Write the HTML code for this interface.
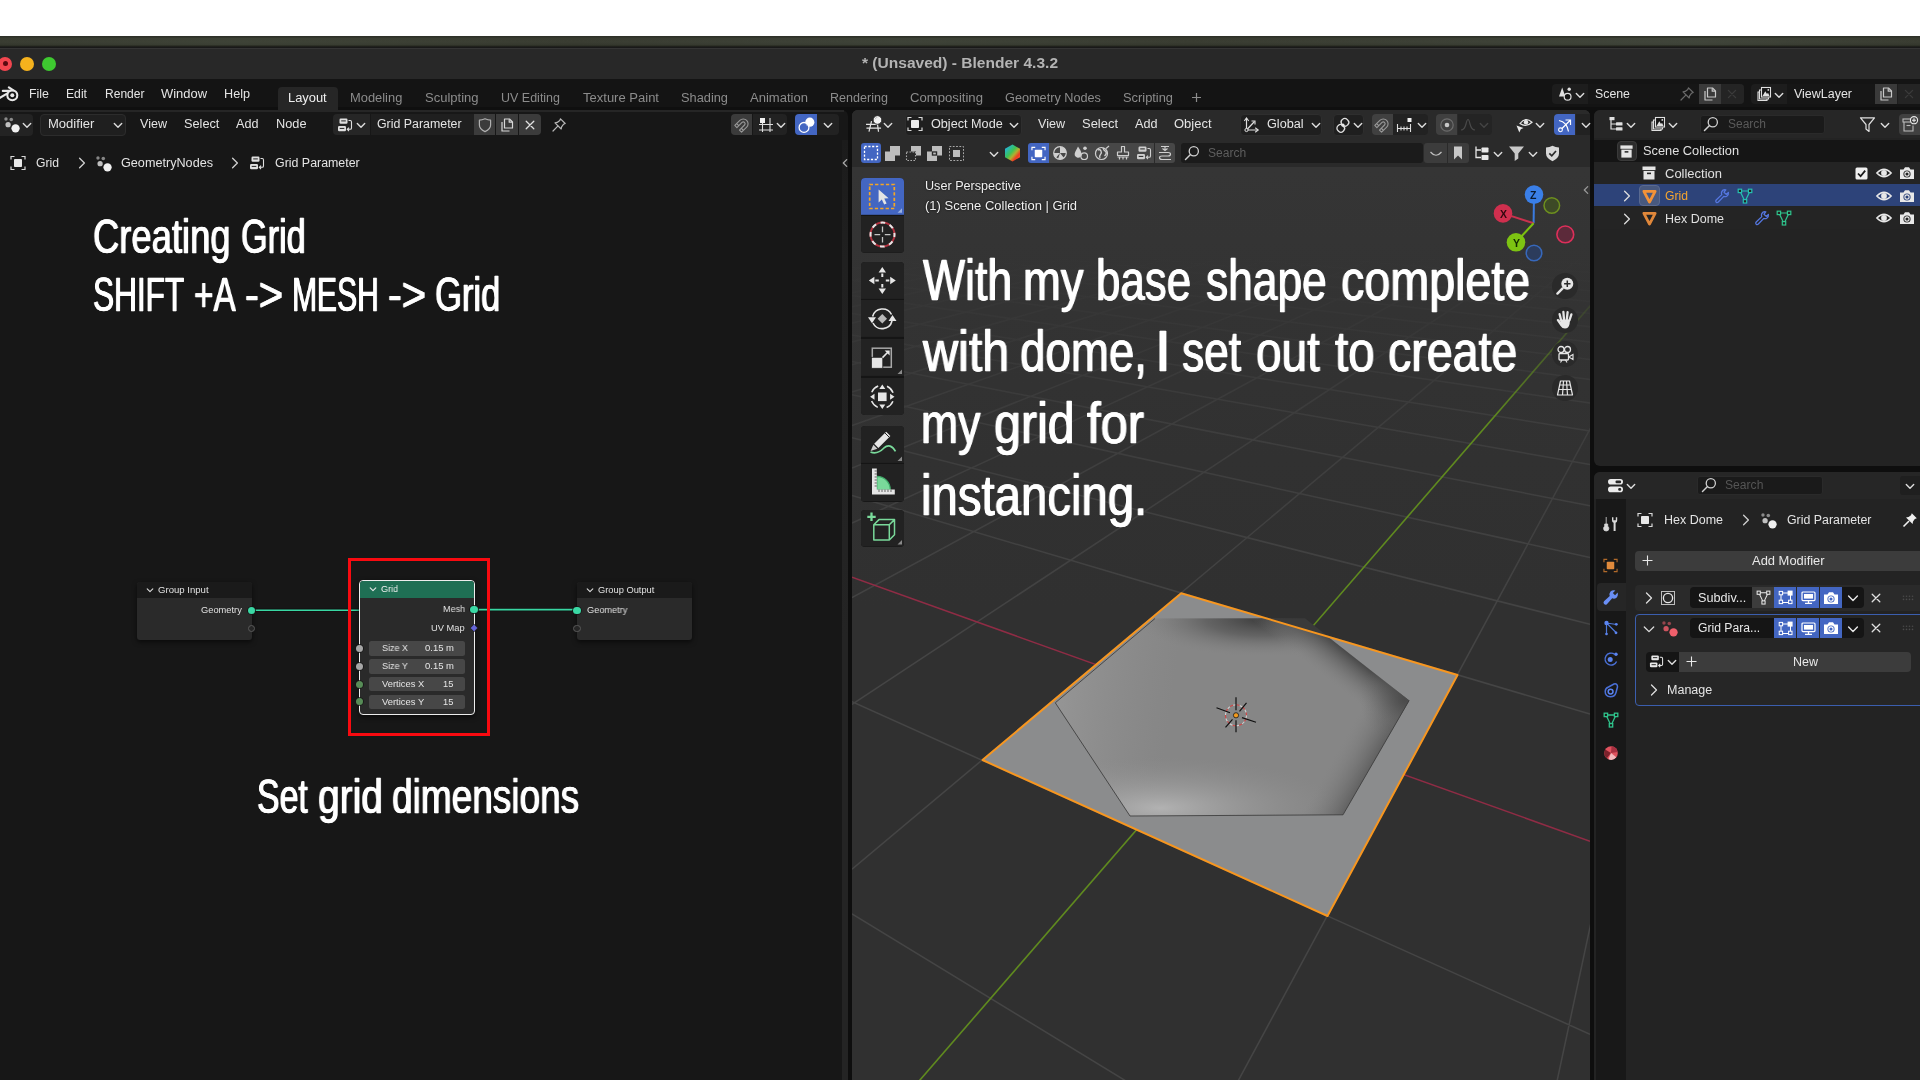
<!DOCTYPE html>
<html>
<head>
<meta charset="utf-8">
<title>Blender</title>
<style>
*{box-sizing:border-box;margin:0;padding:0}
html,body{width:1920px;height:1080px;overflow:hidden;background:#fff}
body{position:relative;font-family:"Liberation Sans",sans-serif;font-size:12px;color:#e2e2e2}
.a{position:absolute}
.t{position:absolute;white-space:nowrap;line-height:16px;height:16px;transform-origin:0 50%}
.big{position:absolute;white-space:nowrap;color:#fff;transform-origin:0 0;line-height:1;-webkit-text-stroke:0.5px #fff;text-shadow:0.7px 0 0 #fff,-0.7px 0 0 #fff}
svg{position:absolute;overflow:visible}
.t,.big{will-change:transform}
</style>
</head>
<body>

<!-- FRAME -->
<div class="a" style="left:0px;top:36px;width:1920px;height:12px;background:linear-gradient(180deg,#2b2e26 0px,#383b30 2.5px,#3a3d32 6px,#34372d 9px,#26281f 10.2px,#191919 10.8px,#191919 12px);"></div>
<div class="a" style="left:0px;top:38px;width:1920px;height:7px;background:linear-gradient(90deg,rgba(60,66,52,.0) 0%,rgba(70,78,64,.35) 12%,rgba(50,54,40,0) 30%,rgba(72,80,70,.3) 47%,rgba(50,54,40,0) 62%,rgba(76,84,74,.35) 88%,rgba(50,54,40,0) 100%);"></div>
<div class="a" style="left:0px;top:47.5px;width:1920px;height:31.5px;background:#282828;border-radius:0;border-top:1px solid #343434;"></div>
<div class="a" style="left:-2px;top:56.5px;width:14px;height:14px;border-radius:7px;background:#f2464f"></div>
<div class="a" style="left:20px;top:56.5px;width:14px;height:14px;border-radius:7px;background:#f5b21d"></div>
<div class="a" style="left:42px;top:56.5px;width:14px;height:14px;border-radius:7px;background:#3ec930"></div>
<div class="a" style="left:2.5px;top:61px;width:5px;height:5px;border-radius:3px;background:#5a0a10"></div>
<span class="t" style="transform:scaleX(1.110);left:862px;top:55px;font-size:14px;color:#b4b4b4;font-weight:bold;">* (Unsaved) - Blender 4.3.2</span>
<div class="a" style="left:0px;top:79px;width:1920px;height:31px;background:#141414;"></div>
<div class="a" style="left:0px;top:106.5px;width:1920px;height:3.5px;background:#0f0f0f;"></div>
<div class="a" style="left:0px;top:110px;width:1920px;height:970px;background:#0e0e0e;"></div>
<svg style="left:0px;top:84px" width="20" height="20" viewBox="0 0 20 20"><g fill="none" stroke="#e8e8e8" stroke-width="2.1" stroke-linecap="round" stroke-linejoin="round"><path d="M-0.5 14 L7 9.6 M2.8 6.9 H9.6 M8.9 3.4 L13 6.2"/><ellipse cx="12.3" cy="11.3" rx="5" ry="4.9"/></g><circle cx="12.3" cy="11.3" r="2" fill="#e8e8e8"/></svg>
<span class="t" style="transform:scaleX(1.034);left:29px;top:86px;font-size:12px;color:#e4e4e4;">File</span>
<span class="t" style="transform:scaleX(1.015);left:66px;top:86px;font-size:12px;color:#e4e4e4;">Edit</span>
<span class="t" style="transform:scaleX(1.004);left:104.5px;top:86px;font-size:12px;color:#e4e4e4;">Render</span>
<span class="t" style="transform:scaleX(1.078);left:161.3px;top:86px;font-size:12px;color:#e4e4e4;">Window</span>
<span class="t" style="transform:scaleX(1.053);left:224.2px;top:86px;font-size:12px;color:#e4e4e4;">Help</span>
<div class="a" style="left:278px;top:87px;width:60px;height:23px;background:#262626;border-radius:4px 4px 0 0;"></div>
<span class="t" style="transform:scaleX(1.074);left:288.3px;top:89.5px;font-size:12px;color:#f0f0f0;">Layout</span>
<span class="t" style="transform:scaleX(1.074);left:349.7px;top:89.5px;font-size:12px;color:#8c8c8c;">Modeling</span>
<span class="t" style="transform:scaleX(1.086);left:424.7px;top:89.5px;font-size:12px;color:#8c8c8c;">Sculpting</span>
<span class="t" style="transform:scaleX(1.041);left:501.3px;top:89.5px;font-size:12px;color:#8c8c8c;">UV Editing</span>
<span class="t" style="transform:scaleX(1.085);left:583px;top:89.5px;font-size:12px;color:#8c8c8c;">Texture Paint</span>
<span class="t" style="transform:scaleX(1.067);left:681px;top:89.5px;font-size:12px;color:#8c8c8c;">Shading</span>
<span class="t" style="transform:scaleX(1.087);left:750px;top:89.5px;font-size:12px;color:#8c8c8c;">Animation</span>
<span class="t" style="transform:scaleX(1.047);left:830px;top:89.5px;font-size:12px;color:#8c8c8c;">Rendering</span>
<span class="t" style="transform:scaleX(1.094);left:910px;top:89.5px;font-size:12px;color:#8c8c8c;">Compositing</span>
<span class="t" style="transform:scaleX(1.058);left:1005px;top:89.5px;font-size:12px;color:#8c8c8c;">Geometry Nodes</span>
<span class="t" style="transform:scaleX(1.071);left:1123px;top:89.5px;font-size:12px;color:#8c8c8c;">Scripting</span>
<svg style="left:1190.5px;top:92px" width="11" height="11" viewBox="0 0 11 11"><path d="M5.5 1 V10 M1 5.5 H10" stroke="#8c8c8c" stroke-width="1.2" fill="none"/></svg>
<div class="a" style="left:1552px;top:84px;width:192px;height:20px;background:#1d1d1d;border-radius:4px;"></div>
<div class="a" style="left:1587.5px;top:84px;width:111px;height:20px;background:#161616;border-radius:0;"></div>
<div class="a" style="left:1698.5px;top:84px;width:22px;height:20px;background:#3a3a3a;border-radius:0;"></div>
<div class="a" style="left:1720.5px;top:84px;width:23px;height:20px;background:#242424;border-radius:0 4px 4px 0;"></div>
<svg style="left:1556.5px;top:86.0px" width="16" height="16" viewBox="0 0 16 16" ><path d="M5.2 1.5 L8.3 10.5 H2 Z" fill="#e0e0e0"/><circle cx="12.2" cy="3.2" r="1.7" fill="#e0e0e0"/><circle cx="10.6" cy="10.8" r="3.4" fill="#151515" stroke="#e0e0e0" stroke-width="1.2"/></svg>
<svg style="left:1574.5px;top:89.5px" width="10" height="10" viewBox="-5 -5 10 10"><path d="M-3.7 -1.55 L0 2.15 L3.7 -1.55" fill="none" stroke="#ddd" stroke-width="1.4" stroke-linecap="round" stroke-linejoin="round"/></svg>
<span class="t" style="transform:scaleX(1.028);left:1595px;top:86px;font-size:12px;color:#e4e4e4;">Scene</span>
<svg style="left:1678.5px;top:86.0px" width="16" height="16" viewBox="0 0 16 16" ><g fill="none" stroke="#6a6a6a" stroke-width="1.2" stroke-linejoin="round" stroke-linecap="round"><path d="M9.5 1.8 L14.2 6.5 L12.6 7.2 L10.6 9.8 L10.2 12 L4 5.8 L6.2 5.4 L8.8 3.4 Z"/><path d="M6.8 9.2 L2 14"/></g></svg>
<svg style="left:1701.5px;top:86.0px" width="16" height="16" viewBox="0 0 16 16" ><g fill="none" stroke="#c8c8c8" stroke-width="1.2" stroke-linejoin="round"><path d="M5.5 2 H10.5 L13.5 5 V11 H5.5 Z"/><path d="M10.2 2.2 V5.2 H13.2"/><path d="M3 5 V14 H10.5"/></g></svg>
<svg style="left:1726px;top:88px" width="12" height="12" viewBox="-6 -6 12 12"><path d="M-3.6 -3.6 L3.6 3.6 M3.6 -3.6 L-3.6 3.6" stroke="#3c3c3c" stroke-width="1.3" stroke-linecap="round" fill="none"/></svg>
<div class="a" style="left:1751px;top:84px;width:169px;height:20px;background:#1d1d1d;border-radius:4px 0 0 4px;"></div>
<div class="a" style="left:1786.5px;top:84px;width:88px;height:20px;background:#161616;border-radius:0;"></div>
<div class="a" style="left:1874.5px;top:84px;width:22.5px;height:20px;background:#3a3a3a;border-radius:0;"></div>
<div class="a" style="left:1897.5px;top:84px;width:22.5px;height:20px;background:#242424;border-radius:0;"></div>
<svg style="left:1755.5px;top:86.0px" width="16" height="16" viewBox="0 0 16 16" ><g fill="none" stroke="#e0e0e0" stroke-width="1.1"><path d="M3.5 6 H2 V14.5 H11 V13"/><path d="M5 4 H3.5 V13 H12.5 V11.5"/><rect x="5.5" y="1.5" width="9" height="9.5" fill="#151515"/></g><path d="M6.5 10 L9.3 5.2 L11 8 L12 6.8 L13.5 10 Z" fill="#e0e0e0"/><circle cx="12.3" cy="3.9" r="0.9" fill="#e0e0e0"/></svg>
<svg style="left:1773.5px;top:89.5px" width="10" height="10" viewBox="-5 -5 10 10"><path d="M-3.7 -1.55 L0 2.15 L3.7 -1.55" fill="none" stroke="#ddd" stroke-width="1.4" stroke-linecap="round" stroke-linejoin="round"/></svg>
<span class="t" style="transform:scaleX(1.039);left:1794.3px;top:86px;font-size:12px;color:#e4e4e4;">ViewLayer</span>
<svg style="left:1878.0px;top:86.0px" width="16" height="16" viewBox="0 0 16 16" ><g fill="none" stroke="#c8c8c8" stroke-width="1.2" stroke-linejoin="round"><path d="M5.5 2 H10.5 L13.5 5 V11 H5.5 Z"/><path d="M10.2 2.2 V5.2 H13.2"/><path d="M3 5 V14 H10.5"/></g></svg>
<svg style="left:1903px;top:88px" width="12" height="12" viewBox="-6 -6 12 12"><path d="M-3.6 -3.6 L3.6 3.6 M3.6 -3.6 L-3.6 3.6" stroke="#3c3c3c" stroke-width="1.3" stroke-linecap="round" fill="none"/></svg>
<!-- NODE EDITOR -->
<div class="a" style="left:0px;top:110px;width:848px;height:970px;background:#171717;border-radius:0 6px 0 0;"></div>
<div class="a" style="left:0px;top:110px;width:844px;height:1.5px;background:#262626;"></div>
<div class="a" style="left:841.5px;top:140px;width:6px;height:940px;background:linear-gradient(180deg,#1b1b1b 0px,#202020 120px,#242424 500px,#242424 940px);"></div>
<div class="a" style="left:0px;top:113.5px;width:33px;height:22px;background:#232323;border-radius:0 4px 4px 0;"></div>
<svg style="left:3.0px;top:115.8px" width="17" height="17" viewBox="0 0 16 16" ><circle cx="2.8" cy="2.8" r="1.6" fill="#d0d0d0" opacity=".6"/><circle cx="7.8" cy="3.3" r="1.7" fill="#d0d0d0" opacity=".6"/><circle cx="4.8" cy="8.2" r="2.5" fill="#d0d0d0" opacity=".9"/><circle cx="11.8" cy="11.6" r="3.9" fill="#f0f0f0"/></svg>
<svg style="left:21.5px;top:120px" width="10" height="10" viewBox="-5 -5 10 10"><path d="M-3.7 -1.55 L0 2.15 L3.7 -1.55" fill="none" stroke="#ddd" stroke-width="1.4" stroke-linecap="round" stroke-linejoin="round"/></svg>
<div class="a" style="left:40px;top:113.5px;width:86px;height:22px;background:#1f1f1f;border-radius:4px;border:1px solid #2c2c2c;"></div>
<span class="t" style="transform:scaleX(1.087);left:48.3px;top:116.2px;font-size:12px;color:#e4e4e4;">Modifier</span>
<svg style="left:112.5px;top:120px" width="10" height="10" viewBox="-5 -5 10 10"><path d="M-3.7 -1.55 L0 2.15 L3.7 -1.55" fill="none" stroke="#ddd" stroke-width="1.4" stroke-linecap="round" stroke-linejoin="round"/></svg>
<span class="t" style="transform:scaleX(1.047);left:139.7px;top:116.2px;font-size:12px;color:#e4e4e4;">View</span>
<span class="t" style="transform:scaleX(1.061);left:183.8px;top:116.2px;font-size:12px;color:#e4e4e4;">Select</span>
<span class="t" style="transform:scaleX(1.053);left:236.3px;top:116.2px;font-size:12px;color:#e4e4e4;">Add</span>
<span class="t" style="transform:scaleX(1.063);left:275.8px;top:116.2px;font-size:12px;color:#e4e4e4;">Node</span>
<div class="a" style="left:332.5px;top:114px;width:37.5px;height:21px;background:#262626;border-radius:4px 0 0 4px;"></div>
<div class="a" style="left:370.5px;top:114px;width:103px;height:21px;background:#1f1f1f;border-radius:0;"></div>
<div class="a" style="left:474px;top:114px;width:21px;height:21px;background:#3b3b3b;border-radius:0;"></div>
<div class="a" style="left:495.5px;top:114px;width:22.5px;height:21px;background:#3b3b3b;border-radius:0;"></div>
<div class="a" style="left:518.5px;top:114px;width:22.5px;height:21px;background:#3b3b3b;border-radius:0 4px 4px 0;"></div>
<svg style="left:336.5px;top:116.5px" width="16" height="16" viewBox="0 0 16 16" ><rect x="2.5" y="1.5" width="8" height="5.2" rx="1.2" fill="#e0e0e0"/><rect x="4.2" y="3.4" width="4.6" height="1" fill="#222"/><rect x="1" y="9" width="8" height="5.2" rx="1.2" fill="#e0e0e0"/><rect x="2.7" y="10.9" width="4.6" height="1" fill="#222"/><path d="M11.5 3.5 H13.2 Q14.5 3.5 14.5 5 V11 Q14.5 12.3 13.2 12.3 H10.5 M12 10.6 L10.3 12.3 L12 14" fill="none" stroke="#e0e0e0" stroke-width="1.1"/></svg>
<svg style="left:356px;top:120px" width="10" height="10" viewBox="-5 -5 10 10"><path d="M-3.7 -1.55 L0 2.15 L3.7 -1.55" fill="none" stroke="#ddd" stroke-width="1.4" stroke-linecap="round" stroke-linejoin="round"/></svg>
<span class="t" style="transform:scaleX(1.031);left:376.7px;top:116.2px;font-size:12px;color:#e4e4e4;">Grid Parameter</span>
<svg style="left:476.5px;top:116.5px" width="16" height="16" viewBox="0 0 16 16" ><path d="M8 1.8 Q11 3.2 13.6 3.2 V8 Q13.6 12 8 14.6 Q2.4 12 2.4 8 V3.2 Q5 3.2 8 1.8 Z" fill="none" stroke="#b0b0b0" stroke-width="1.2" stroke-linejoin="round"/></svg>
<svg style="left:499.0px;top:116.5px" width="16" height="16" viewBox="0 0 16 16" ><g fill="none" stroke="#d8d8d8" stroke-width="1.2" stroke-linejoin="round"><path d="M5.5 2 H10.5 L13.5 5 V11 H5.5 Z"/><path d="M10.2 2.2 V5.2 H13.2"/><path d="M3 5 V14 H10.5"/></g></svg>
<svg style="left:523.5px;top:118.5px" width="12" height="12" viewBox="-6 -6 12 12"><path d="M-3.8 -3.8 L3.8 3.8 M3.8 -3.8 L-3.8 3.8" stroke="#e0e0e0" stroke-width="1.3" stroke-linecap="round" fill="none"/></svg>
<svg style="left:550.5px;top:116.5px" width="16" height="16" viewBox="0 0 16 16" ><g fill="none" stroke="#b8b8b8" stroke-width="1.2" stroke-linejoin="round" stroke-linecap="round"><path d="M9.5 1.8 L14.2 6.5 L12.6 7.2 L10.6 9.8 L10.2 12 L4 5.8 L6.2 5.4 L8.8 3.4 Z"/><path d="M6.8 9.2 L2 14"/></g></svg>
<div class="a" style="left:731px;top:114px;width:21px;height:21px;background:#3b3b3b;border-radius:4px 0 0 4px;"></div>
<div class="a" style="left:752.5px;top:114px;width:34.5px;height:21px;background:#222;border-radius:0 4px 4px 0;"></div>
<svg style="left:733.5px;top:116.5px" width="16" height="16" viewBox="0 0 16 16" ><path transform="rotate(45 8 8) translate(0 -0.8)" d="M3.2 14.2 V7 A4.8 4.8 0 0 1 12.8 7 V14.2 H9.8 V7 A1.8 1.8 0 0 0 6.2 7 V14.2 Z M3.2 11.6 H6.2 M9.8 11.6 H12.8" fill="none" stroke="#9a9a9a" stroke-width="1.1" stroke-linejoin="round"/></svg>
<svg style="left:758.0px;top:116.5px" width="16" height="16" viewBox="0 0 16 16" ><path d="M4.5 3.5 V15 M12 1 V15 M1 7.5 H15 M1 13 H15" stroke="#ddd" stroke-width="1.1" fill="none"/><rect x="2" y="1" width="5" height="5" fill="#f0f0f0"/></svg>
<svg style="left:775.5px;top:120px" width="10" height="10" viewBox="-5 -5 10 10"><path d="M-3.7 -1.55 L0 2.15 L3.7 -1.55" fill="none" stroke="#ddd" stroke-width="1.4" stroke-linecap="round" stroke-linejoin="round"/></svg>
<div class="a" style="left:795px;top:114px;width:21.5px;height:21px;background:#4366c2;border-radius:4px 0 0 4px;"></div>
<div class="a" style="left:817px;top:114px;width:21.5px;height:21px;background:#222;border-radius:0 4px 4px 0;"></div>
<svg style="left:797.7px;top:116.5px" width="16" height="16" viewBox="0 0 16 16" ><circle cx="11.8" cy="5.2" r="4.6" fill="#fff"/><circle cx="6" cy="10.4" r="4.9" fill="#4366c2" fill-opacity=".55" stroke="#fff" stroke-width="1.3"/></svg>
<svg style="left:822.5px;top:120px" width="10" height="10" viewBox="-5 -5 10 10"><path d="M-3.7 -1.55 L0 2.15 L3.7 -1.55" fill="none" stroke="#ddd" stroke-width="1.4" stroke-linecap="round" stroke-linejoin="round"/></svg>
<svg style="left:839.5px;top:157.5px" width="10" height="10" viewBox="-5 -5 10 10"><path d="M1.7 -3.4 L-1.7 0 L1.7 3.4" fill="none" stroke="#aaa" stroke-width="1.3" stroke-linecap="round" stroke-linejoin="round"/></svg>
<svg style="left:10.0px;top:155.0px" width="16" height="16" viewBox="0 0 16 16" ><path d="M1 4.5 V1.5 H4.5 M11.5 1.5 H15 V4.5 M15 11.5 V14.5 H11.5 M4.5 14.5 H1 V11.5" fill="none" stroke="#d8d8d8" stroke-width="1.2"/><rect x="4" y="4" width="8" height="8" rx="0.8" fill="#e8e8e8"/></svg>
<span class="t" style="transform:scaleX(1.014);left:36.3px;top:155px;font-size:12px;color:#e4e4e4;">Grid</span>
<svg style="left:76.5px;top:158px" width="10" height="10" viewBox="-5 -5 10 10"><path d="M-2.4 -4.8 L2.4 0 L-2.4 4.8" fill="none" stroke="#d0d0d0" stroke-width="1.3" stroke-linecap="round" stroke-linejoin="round"/></svg>
<svg style="left:95.0px;top:154.5px" width="17" height="17" viewBox="0 0 16 16" ><circle cx="2.8" cy="2.8" r="1.6" fill="#d0d0d0" opacity=".6"/><circle cx="7.8" cy="3.3" r="1.7" fill="#d0d0d0" opacity=".6"/><circle cx="4.8" cy="8.2" r="2.5" fill="#d0d0d0" opacity=".9"/><circle cx="11.8" cy="11.6" r="3.9" fill="#f0f0f0"/></svg>
<span class="t" style="transform:scaleX(1.053);left:121.3px;top:155px;font-size:12px;color:#e4e4e4;">GeometryNodes</span>
<svg style="left:230px;top:158px" width="10" height="10" viewBox="-5 -5 10 10"><path d="M-2.4 -4.8 L2.4 0 L-2.4 4.8" fill="none" stroke="#d0d0d0" stroke-width="1.3" stroke-linecap="round" stroke-linejoin="round"/></svg>
<svg style="left:249.0px;top:155.0px" width="16" height="16" viewBox="0 0 16 16" ><rect x="2.5" y="1.5" width="8" height="5.2" rx="1.2" fill="#e0e0e0"/><rect x="4.2" y="3.4" width="4.6" height="1" fill="#222"/><rect x="1" y="9" width="8" height="5.2" rx="1.2" fill="#e0e0e0"/><rect x="2.7" y="10.9" width="4.6" height="1" fill="#222"/><path d="M11.5 3.5 H13.2 Q14.5 3.5 14.5 5 V11 Q14.5 12.3 13.2 12.3 H10.5 M12 10.6 L10.3 12.3 L12 14" fill="none" stroke="#e0e0e0" stroke-width="1.1"/></svg>
<span class="t" style="transform:scaleX(1.033);left:275.3px;top:155px;font-size:12px;color:#e4e4e4;">Grid Parameter</span>
<svg style="left:0;top:0" width="848" height="1080"><path d="M251.3 610.3 H359 M474 609.6 H577" stroke="#111" stroke-width="3.4" fill="none"/><path d="M251.3 610.3 H359 M474 609.6 H577" stroke="#39d7a3" stroke-width="1.6" fill="none"/></svg>
<div class="a" style="left:137px;top:582px;width:114.5px;height:58px;background:#2a2a2a;border-radius:3px;box-shadow:0 2px 5px rgba(0,0,0,.6);"></div>
<div class="a" style="left:137px;top:582px;width:114.5px;height:16px;background:#1a1a1a;border-radius:3px 3px 0 0;"></div>
<svg style="left:145px;top:585px" width="10" height="10" viewBox="-5 -5 10 10"><path d="M-2.8 -1.0999999999999999 L0 1.7 L2.8 -1.0999999999999999" fill="none" stroke="#ddd" stroke-width="1.1" stroke-linecap="round" stroke-linejoin="round"/></svg>
<span class="t" style="transform:scaleX(1.030);left:158.4px;top:582px;font-size:9.3px;color:#e0e0e0;">Group Input</span>
<span class="t" style="transform:scaleX(0.994);left:201.3px;top:602.3px;font-size:9.3px;color:#e0e0e0;">Geometry</span>
<div class="a" style="left:247.70000000000002px;top:606.6999999999999px;width:7.2px;height:7.2px;border-radius:4px;background:#3ad8a4;box-shadow:0 0 0 0.8px #141414"></div>
<div class="a" style="left:247.70000000000002px;top:624.8px;width:7.2px;height:7.2px;border-radius:4px;background:#262626;border:1px solid #5a5a5a"></div>
<div class="a" style="left:577px;top:582px;width:114.5px;height:58px;background:#2a2a2a;border-radius:3px;box-shadow:0 2px 5px rgba(0,0,0,.6);"></div>
<div class="a" style="left:577px;top:582px;width:114.5px;height:16px;background:#1a1a1a;border-radius:3px 3px 0 0;"></div>
<svg style="left:584.5px;top:585px" width="10" height="10" viewBox="-5 -5 10 10"><path d="M-2.8 -1.0999999999999999 L0 1.7 L2.8 -1.0999999999999999" fill="none" stroke="#ddd" stroke-width="1.1" stroke-linecap="round" stroke-linejoin="round"/></svg>
<span class="t" style="transform:scaleX(0.997);left:597.5px;top:582px;font-size:9.3px;color:#e0e0e0;">Group Output</span>
<span class="t" style="transform:scaleX(0.987);left:586.6px;top:602.3px;font-size:9.3px;color:#e0e0e0;">Geometry</span>
<div class="a" style="left:573.4px;top:606.6999999999999px;width:7.2px;height:7.2px;border-radius:4px;background:#3ad8a4;box-shadow:0 0 0 0.8px #141414"></div>
<div class="a" style="left:573.4px;top:624.8px;width:7.2px;height:7.2px;border-radius:4px;background:#262626;border:1px solid #5a5a5a"></div>
<div class="a" style="left:358.5px;top:580px;width:116.5px;height:134.5px;background:#2a2a2a;border-radius:4px;border:1px solid #ededed;overflow:hidden;box-shadow:0 2px 5px rgba(0,0,0,.6);"></div>
<div class="a" style="left:359.5px;top:581px;width:114.5px;height:17px;background:#1f6f54;border-radius:3px 3px 0 0;"></div>
<svg style="left:367.5px;top:584px" width="10" height="10" viewBox="-5 -5 10 10"><path d="M-2.8 -1.0999999999999999 L0 1.7 L2.8 -1.0999999999999999" fill="none" stroke="#e8e8e8" stroke-width="1.1" stroke-linecap="round" stroke-linejoin="round"/></svg>
<span class="t" style="transform:scaleX(0.967);left:381px;top:581px;font-size:9.3px;color:#f0f0f0;">Grid</span>
<span class="t" style="transform:scaleX(0.976);left:442.5px;top:601.4px;font-size:9.3px;color:#e0e0e0;">Mesh</span>
<span class="t" style="transform:scaleX(1.003);left:431px;top:619.5px;font-size:9.3px;color:#e0e0e0;">UV Map</span>
<div class="a" style="left:470.4px;top:606.0px;width:7.2px;height:7.2px;border-radius:4px;background:#3ad8a4;box-shadow:0 0 0 0.8px #141414"></div>
<svg style="left:469px;top:622.5px" width="10" height="10" viewBox="-5 -5 10 10"><path d="M0 -3.8 L3.8 0 L0 3.8 L-3.8 0 Z" fill="#6464d8" stroke="#1a1a1a" stroke-width="0.8"/></svg>
<div class="a" style="left:369px;top:641.0px;width:96px;height:14.6px;background:#474747;border-radius:2.5px;"></div>
<span class="t" style="transform:scaleX(0.964);left:381.6px;top:640.3px;font-size:9.3px;color:#e6e6e6;">Size X</span>
<span class="t" style="transform:scaleX(1.020);left:424.7px;top:640.3px;font-size:9.3px;color:#e6e6e6;">0.15 m</span>
<div class="a" style="left:355.9px;top:644.6999999999999px;width:7.2px;height:7.2px;border-radius:4px;background:#a6a6a6;box-shadow:0 0 0 0.8px #141414"></div>
<div class="a" style="left:369px;top:659.0px;width:96px;height:14.6px;background:#474747;border-radius:2.5px;"></div>
<span class="t" style="transform:scaleX(0.970);left:381.6px;top:658.3px;font-size:9.3px;color:#e6e6e6;">Size Y</span>
<span class="t" style="transform:scaleX(1.020);left:424.7px;top:658.3px;font-size:9.3px;color:#e6e6e6;">0.15 m</span>
<div class="a" style="left:355.9px;top:662.6999999999999px;width:7.2px;height:7.2px;border-radius:4px;background:#a6a6a6;box-shadow:0 0 0 0.8px #141414"></div>
<div class="a" style="left:369px;top:676.9000000000001px;width:96px;height:14.6px;background:#474747;border-radius:2.5px;"></div>
<span class="t" style="transform:scaleX(1.008);left:381.6px;top:676.2px;font-size:9.3px;color:#e6e6e6;">Vertices X</span>
<span class="t" style="transform:scaleX(0.996);left:443.4px;top:676.2px;font-size:9.3px;color:#e6e6e6;">15</span>
<div class="a" style="left:355.9px;top:680.6px;width:7.2px;height:7.2px;border-radius:4px;background:#578c57;box-shadow:0 0 0 0.8px #141414"></div>
<div class="a" style="left:369px;top:694.6px;width:96px;height:14.6px;background:#474747;border-radius:2.5px;"></div>
<span class="t" style="transform:scaleX(1.012);left:381.6px;top:693.9px;font-size:9.3px;color:#e6e6e6;">Vertices Y</span>
<span class="t" style="transform:scaleX(0.996);left:443.4px;top:693.9px;font-size:9.3px;color:#e6e6e6;">15</span>
<div class="a" style="left:355.9px;top:698.3px;width:7.2px;height:7.2px;border-radius:4px;background:#578c57;box-shadow:0 0 0 0.8px #141414"></div>
<div class="a" style="left:348px;top:558px;width:141.5px;height:177.5px;border:3px solid #f80a10"></div>
<!-- VIEWPORT -->
<div class="a" style="left:852px;top:110px;width:738px;height:970px;border-radius:6px 6px 0 0;overflow:hidden;background:linear-gradient(180deg,#353535 0px,#353535 60px,#333333 200px,#313131 350px,#303030 500px,#303030 970px)">
<svg style="left:-852px;top:-110px" width="1920" height="1080" viewBox="0 0 1920 1080">
<defs>
<linearGradient id="gfade" gradientUnits="userSpaceOnUse" x1="0" y1="250" x2="0" y2="650"><stop offset="0" stop-color="#fff" stop-opacity="0"/><stop offset="0.2" stop-color="#fff" stop-opacity="0.022"/><stop offset="0.45" stop-color="#fff" stop-opacity="0.06"/><stop offset="1" stop-color="#fff" stop-opacity="0.1"/></linearGradient>
<linearGradient id="yfade" gradientUnits="userSpaceOnUse" x1="0" y1="285" x2="0" y2="420"><stop offset="0" stop-color="#5f8a1e" stop-opacity="0"/><stop offset="1" stop-color="#5f8a1e" stop-opacity="1"/></linearGradient>
<clipPath id="hexclip"><path d="M1155 618.5 L1304.5 618.3 L1409.2 700.4 L1343 814.8 L1130 816 L1055.3 702.8 Z"/></clipPath>
<clipPath id="planeclip"><path d="M1181.2 593.2 L1457.5 675 L1327.5 916 L982.5 760 Z"/></clipPath>
<radialGradient id="dtop" gradientUnits="userSpaceOnUse" cx="1262" cy="619" r="125" gradientTransform="translate(1262 619) scale(1 0.3) translate(-1262 -619)"><stop offset="0" stop-color="#3c3c3c" stop-opacity="1"/><stop offset="0.45" stop-color="#555" stop-opacity=".7"/><stop offset="1" stop-color="#808080" stop-opacity="0"/></radialGradient>
<linearGradient id="dright" gradientUnits="userSpaceOnUse" x1="1357" y1="659" x2="1336" y2="686"><stop offset="0" stop-color="#484848" stop-opacity="1"/><stop offset="0.5" stop-color="#666" stop-opacity=".55"/><stop offset="1" stop-color="#808080" stop-opacity="0"/></linearGradient>
<linearGradient id="dright2" gradientUnits="userSpaceOnUse" x1="1376" y1="757" x2="1344" y2="739"><stop offset="0" stop-color="#5e5e5e" stop-opacity=".9"/><stop offset="1" stop-color="#808080" stop-opacity="0"/></linearGradient>
<radialGradient id="dlight" gradientUnits="userSpaceOnUse" cx="1160" cy="808" r="120" gradientTransform="translate(1160 808) scale(1.5 0.42) translate(-1160 -808)"><stop offset="0" stop-color="#b2b2b2" stop-opacity="1"/><stop offset="1" stop-color="#909090" stop-opacity="0"/></radialGradient>
<linearGradient id="dleft" gradientUnits="userSpaceOnUse" x1="1060" y1="700" x2="1170" y2="715"><stop offset="0" stop-color="#989898" stop-opacity=".8"/><stop offset="1" stop-color="#909090" stop-opacity="0"/></linearGradient>
<radialGradient id="dbr" gradientUnits="userSpaceOnUse" cx="1405" cy="700" r="45"><stop offset="0" stop-color="#4a4a4a" stop-opacity=".9"/><stop offset="1" stop-color="#707070" stop-opacity="0"/></radialGradient>
</defs>
<path d="M852.0 495.5 L1590.0 714.1 M852.0 437.7 L1590.0 624.3 M852.0 394.7 L1590.0 557.5 M852.0 361.5 L1590.0 505.8 M852.0 335.0 L1590.0 464.6 M852.0 313.4 L1590.0 431.0 M852.0 295.4 L1590.0 403.1 M852.0 280.3 L1590.0 379.6 M852.0 267.3 L1590.0 359.4 M852.0 256.1 L1590.0 342.0 M852.0 246.3 L1590.0 326.8 M852.0 237.7 L1590.0 313.4 M852.0 230.0 L1590.0 301.5 M852.0 223.1 L1590.0 290.8 M852.0 217.0 L1590.0 281.2 M852.0 211.4 L1590.0 272.6 M852.0 206.4 L1590.0 264.7 M852.0 201.7 L1590.0 257.5 M852.0 197.5 L1590.0 251.0 M852.0 193.6 L1590.0 244.9 M852.0 190.0 L1590.0 239.4 M852.0 186.7 L1590.0 234.2 M852.0 183.6 L1590.0 229.4 M852.0 180.8 L1590.0 225.0 M852.0 178.1 L1590.0 220.8 M852.0 175.6 L1590.0 216.9 M852.0 173.3 L1590.0 213.3 M852.0 171.1 L1590.0 209.9 M852.0 169.0 L1590.0 206.6 M852.0 167.0 L1590.0 203.6 M852.0 165.2 L1590.0 200.7 M852.0 163.4 L1590.0 198.0 M852.0 161.8 L1590.0 195.5 M852.0 701.6 L1590.0 1034.3 M852.0 913.8 L1590.0 1364.2 M852.0 869.3 L1590.0 249.6 M852.0 704.4 L1590.0 217.7 M852.0 597.7 L1590.0 197.1 M852.0 523.1 L1590.0 182.7 M852.0 468.0 L1590.0 172.0 M852.0 425.6 L1590.0 163.8 M852.0 392.0 L1590.0 157.3 M852.0 364.7 L1590.0 152.0 M852.0 342.1 L1590.0 147.6 M852.0 323.0 L1590.0 144.0 M852.0 306.8 L1590.0 140.8 M852.0 292.7 L1590.0 138.1 M852.0 280.5 L1590.0 135.7 M852.0 269.7 L1590.0 133.6 M852.0 260.2 L1590.0 131.8 M852.0 251.6 L1590.0 130.1 M852.0 244.0 L1590.0 128.7 M852.0 237.0 L1590.0 127.3 M852.0 230.8 L1590.0 126.1 M852.0 225.0 L1590.0 125.0 M852.0 219.8 L1590.0 124.0 M852.0 215.0 L1590.0 123.0 M852.0 210.5 L1590.0 122.2 M852.0 206.4 L1590.0 121.4 M852.0 202.6 L1590.0 120.7 M852.0 199.1 L1590.0 120.0 M852.0 195.8 L1590.0 119.3 M852.0 192.7 L1590.0 118.7 M852.0 189.8 L1590.0 118.2 M852.0 187.1 L1590.0 117.6 M852.0 184.5 L1590.0 117.2 M852.0 182.1 L1590.0 116.7 M852.0 179.8 L1590.0 116.2 M852.0 177.7 L1590.0 115.8 M852.0 175.6 L1590.0 115.4 M852.0 173.7 L1590.0 115.1 M852.0 171.9 L1590.0 114.7 M852.0 170.1 L1590.0 114.4 M852.0 168.5 L1590.0 114.1 M1740.6 150 L1227.8 1100 M1756.5 150 L1553.0 1100" stroke="url(#gfade)" stroke-width="1.5" fill="none"/>
<path d="M852.0 577.3 L1590.0 841.2" stroke="#8f2c45" stroke-width="1.5" fill="none"/>
<path d="M1615 277.1 L905 1097.3" stroke="url(#yfade)" stroke-width="1.6" fill="none"/>
<path d="M1181.2 593.2 L1457.5 675 L1327.5 916 L982.5 760 Z" fill="#8b8c8d"/>
<path d="M1258 618 L1305 618.2 L1328 636.5 Z" fill="#3a3a3a"/>
<g clip-path="url(#planeclip)"><g clip-path="url(#hexclip)">
<rect x="1040" y="600" width="400" height="230" fill="#868686"/>
<rect x="1040" y="600" width="400" height="230" fill="url(#dleft)"/>
<rect x="1040" y="600" width="400" height="230" fill="url(#dlight)"/>
<rect x="1040" y="600" width="400" height="230" fill="url(#dtop)"/>
<rect x="1040" y="600" width="400" height="230" fill="url(#dright2)"/>
<rect x="1040" y="600" width="400" height="230" fill="url(#dright)"/>
<rect x="1040" y="600" width="400" height="230" fill="url(#dbr)"/>
</g>
<path d="M1155 618.5 L1055.3 702.8 L1130 816 L1343 814.8 L1409.2 700.4" fill="none" stroke="#3c3c3c" stroke-width="1" opacity=".85"/>
</g>
<path d="M1181.2 593.2 L1457.5 675 L1327.5 916 L982.5 760 Z" fill="none" stroke="#f7961f" stroke-width="2" stroke-linejoin="round"/>
<g transform="translate(1236 715.3)"><circle r="10.5" fill="none" stroke="#e8e8e8" stroke-width="1.1" stroke-dasharray="3.3 3.3" opacity=".75"/><circle r="10.5" fill="none" stroke="#e03a3a" stroke-width="1.1" stroke-dasharray="3.3 3.3" stroke-dashoffset="3.3" opacity=".85"/><path d="M0 -18 V-5 M0 5 V17 M-19.5 -7.5 L-6 -2.5 M6 2.3 L20 7 M10.5 -12.5 L3.5 -4 M-3.5 4 L-10.5 12" stroke="#111" stroke-width="1.2" fill="none"/><circle r="2.6" fill="#f39a1c" stroke="#222" stroke-width="0.9"/></g>
</svg>
</div>
<div class="a" style="left:852px;top:110px;width:738px;height:57px;background:#2a2a2a;border-radius:6px 6px 0 0;"></div>
<svg style="left:862.0px;top:115.0px" width="18" height="18" viewBox="0 0 17 17" ><path d="M9 5.8 L6.6 15.8 M14.6 8.6 L15.6 15.8 M3.8 8.8 H15 M4.2 12.4 H18" stroke="#e4e4e4" stroke-width="1.15" fill="none"/><circle cx="14.6" cy="4.7" r="4.1" fill="#f2f2f2" stroke="#2a2a2a" stroke-width="0.9"/><path d="M12.2 4.2 A2.6 2.6 0 0 1 14.6 2.2" stroke="#bbb" stroke-width=".8" fill="none"/></svg>
<svg style="left:883px;top:120px" width="10" height="10" viewBox="-5 -5 10 10"><path d="M-3.7 -1.55 L0 2.15 L3.7 -1.55" fill="none" stroke="#ddd" stroke-width="1.4" stroke-linecap="round" stroke-linejoin="round"/></svg>
<div class="a" style="left:905px;top:113.5px;width:116.5px;height:22px;background:#1f1f1f;border-radius:4px;border:1px solid #2e2e2e;"></div>
<svg style="left:907.0px;top:116.3px" width="16" height="16" viewBox="0 0 16 16" ><path d="M1 4.5 V1.5 H4.5 M11.5 1.5 H15 V4.5 M15 11.5 V14.5 H11.5 M4.5 14.5 H1 V11.5" fill="none" stroke="#d8d8d8" stroke-width="1.2"/><rect x="4" y="4" width="8" height="8" rx="0.8" fill="#efefef"/></svg>
<span class="t" style="transform:scaleX(1.054);left:930.8px;top:116px;font-size:12px;color:#e4e4e4;">Object Mode</span>
<svg style="left:1009px;top:120px" width="10" height="10" viewBox="-5 -5 10 10"><path d="M-3.7 -1.55 L0 2.15 L3.7 -1.55" fill="none" stroke="#ddd" stroke-width="1.4" stroke-linecap="round" stroke-linejoin="round"/></svg>
<span class="t" style="transform:scaleX(1.047);left:1038px;top:116px;font-size:12px;color:#e4e4e4;">View</span>
<span class="t" style="transform:scaleX(1.079);left:1082px;top:116px;font-size:12px;color:#e4e4e4;">Select</span>
<span class="t" style="transform:scaleX(1.053);left:1134.5px;top:116px;font-size:12px;color:#e4e4e4;">Add</span>
<span class="t" style="transform:scaleX(1.081);left:1174px;top:116px;font-size:12px;color:#e4e4e4;">Object</span>
<div class="a" style="left:1240px;top:113.5px;width:82px;height:22px;background:#1f1f1f;border-radius:4px;border:1px solid #2e2e2e;"></div>
<svg style="left:1243.0px;top:116.5px" width="16" height="16" viewBox="0 0 16 16" ><path d="M3.5 1.5 V13 H15 M3.5 13 L11.5 4.5" stroke="#e0e0e0" stroke-width="1.2" fill="none"/><path d="M1.3 4 L3.5 1 L5.7 4 M12.2 10.8 L15.2 13 L12.2 15.2 M8.5 4 H12 V7.5" stroke="#e0e0e0" stroke-width="1.1" fill="none"/><circle cx="3.5" cy="13" r="1.6" fill="#2a2a2a" stroke="#e0e0e0" stroke-width="1"/></svg>
<span class="t" style="transform:scaleX(1.055);left:1266.7px;top:116px;font-size:12px;color:#e4e4e4;">Global</span>
<svg style="left:1311px;top:120px" width="10" height="10" viewBox="-5 -5 10 10"><path d="M-3.7 -1.55 L0 2.15 L3.7 -1.55" fill="none" stroke="#ddd" stroke-width="1.4" stroke-linecap="round" stroke-linejoin="round"/></svg>
<div class="a" style="left:1332.5px;top:113.5px;width:31px;height:22px;background:#1f1f1f;border-radius:4px;border:1px solid #2e2e2e;"></div>
<svg style="left:1335.0px;top:116.5px" width="16" height="16" viewBox="0 0 16 16" ><g fill="none" stroke="#e0e0e0" stroke-width="1.3"><rect x="6.2" y="1.8" width="7.5" height="7" rx="3.2" transform="rotate(45 10 5.3)"/><rect x="2" y="7.8" width="7.5" height="7" rx="3.2" transform="rotate(45 5.7 11.3)"/></g><circle cx="8" cy="8.2" r="1.6" fill="#e8e8e8"/></svg>
<svg style="left:1352.5px;top:120px" width="10" height="10" viewBox="-5 -5 10 10"><path d="M-3.7 -1.55 L0 2.15 L3.7 -1.55" fill="none" stroke="#ddd" stroke-width="1.4" stroke-linecap="round" stroke-linejoin="round"/></svg>
<div class="a" style="left:1371.5px;top:114px;width:21px;height:21px;background:#404040;border-radius:4px 0 0 4px;"></div>
<div class="a" style="left:1393px;top:114px;width:35px;height:21px;background:#222;border-radius:0 4px 4px 0;"></div>
<svg style="left:1374.0px;top:116.5px" width="16" height="16" viewBox="0 0 16 16" ><path transform="rotate(45 8 8) translate(0 -0.8)" d="M3.2 14.2 V7 A4.8 4.8 0 0 1 12.8 7 V14.2 H9.8 V7 A1.8 1.8 0 0 0 6.2 7 V14.2 Z M3.2 11.6 H6.2 M9.8 11.6 H12.8" fill="none" stroke="#9a9a9a" stroke-width="1.1" stroke-linejoin="round"/></svg>
<svg style="left:1396.0px;top:116.5px" width="16" height="16" viewBox="0 0 16 16" ><path d="M1.5 7 V15 M14.5 7 V15 M1.5 11.5 H14.5 M5 9.5 V13.5 M8 9.5 V13.5 M11 9.5 V13.5" stroke="#ddd" stroke-width="1.1" fill="none"/><rect x="11.5" y="1" width="4" height="4" fill="#f0f0f0"/></svg>
<svg style="left:1417px;top:120px" width="10" height="10" viewBox="-5 -5 10 10"><path d="M-3.7 -1.55 L0 2.15 L3.7 -1.55" fill="none" stroke="#ddd" stroke-width="1.4" stroke-linecap="round" stroke-linejoin="round"/></svg>
<div class="a" style="left:1436px;top:114px;width:21px;height:21px;background:#404040;border-radius:4px 0 0 4px;"></div>
<div class="a" style="left:1457.5px;top:114px;width:34.5px;height:21px;background:#242424;border-radius:0 4px 4px 0;"></div>
<svg style="left:1438.5px;top:116.5px" width="16" height="16" viewBox="0 0 16 16" ><circle cx="8" cy="8" r="6.2" fill="none" stroke="#6c6c6c" stroke-width="1.2"/><circle cx="8" cy="8" r="2.3" fill="#c8c8c8"/></svg>
<svg style="left:1460.0px;top:116.5px" width="16" height="16" viewBox="0 0 16 16" ><path d="M1 13 Q4.5 13 6 7 Q7 2.5 8 2.5 Q9 2.5 10 7 Q11.5 13 15 13" fill="none" stroke="#4a4a4a" stroke-width="1.2"/></svg>
<svg style="left:1479px;top:120px" width="10" height="10" viewBox="-5 -5 10 10"><path d="M-3.7 -1.55 L0 2.15 L3.7 -1.55" fill="none" stroke="#444" stroke-width="1.4" stroke-linecap="round" stroke-linejoin="round"/></svg>
<svg style="left:1514.5px;top:115.5px" width="18" height="18" viewBox="0 0 18 18" ><path d="M5 7.5 Q10.5 0.5 17 6.2 Q11 12 5 7.5 Z" fill="none" stroke="#e8e8e8" stroke-width="1.2"/><circle cx="11" cy="6.2" r="2.2" fill="#e8e8e8"/><path d="M1.5 9.5 L8.5 12 L5.8 13.3 L4.3 16.5 Z" fill="#e8e8e8"/></svg>
<svg style="left:1535px;top:120px" width="10" height="10" viewBox="-5 -5 10 10"><path d="M-3.7 -1.55 L0 2.15 L3.7 -1.55" fill="none" stroke="#ddd" stroke-width="1.4" stroke-linecap="round" stroke-linejoin="round"/></svg>
<div class="a" style="left:1554px;top:114px;width:21px;height:21px;background:#4366c2;border-radius:4px 0 0 4px;"></div>
<div class="a" style="left:1575.5px;top:114px;width:14.5px;height:21px;background:#222;border-radius:0;"></div>
<svg style="left:1556.5px;top:116.5px" width="16" height="16" viewBox="0 0 16 16" ><path d="M2 3.5 Q10 5 11.5 14.5" fill="none" stroke="#fff" stroke-width="1.2"/><path d="M4 12.5 L13 3.5 M8.5 3 H13.5 V8" fill="none" stroke="#fff" stroke-width="1.2"/><circle cx="3.5" cy="12.8" r="1.9" fill="#4366c2" stroke="#fff" stroke-width="1.1"/></svg>
<svg style="left:1580.5px;top:120px" width="10" height="10" viewBox="-5 -5 10 10"><path d="M-3.7 -1.55 L0 2.15 L3.7 -1.55" fill="none" stroke="#ddd" stroke-width="1.4" stroke-linecap="round" stroke-linejoin="round"/></svg>
<div class="a" style="left:860.5px;top:143px;width:20.5px;height:20px;background:#4366c2;border-radius:3px;"></div>
<svg style="left:862.8px;top:145.0px" width="16" height="16" viewBox="0 0 16 16" ><rect x="1.5" y="1.5" width="13" height="13" fill="none" stroke="#fff" stroke-width="1.3" stroke-dasharray="2.2 1.6"/></svg>
<svg style="left:883.5px;top:144.5px" width="17" height="17" viewBox="0 0 17 17" ><path d="M6 1 H16 V10.5 H11 V16 H1 V6.5 H6 Z" fill="#bdbdbd"/></svg>
<svg style="left:905.0px;top:144.5px" width="17" height="17" viewBox="0 0 17 17" ><path d="M6 1 H16 V10.5 H11 V6.5 H6 Z" fill="#bdbdbd"/><rect x="1.5" y="7" width="9" height="8.5" fill="none" stroke="#aaa" stroke-width="1.1" stroke-dasharray="1.6 1.4"/></svg>
<svg style="left:926.3px;top:144.5px" width="17" height="17" viewBox="0 0 17 17" ><path d="M6 1 H16 V10.5 H11 V16 H1 V6.5 H6 Z" fill="#bdbdbd"/><rect x="5.8" y="6.3" width="5.4" height="4.4" fill="#2a2a2a"/><rect x="7.2" y="7.6" width="2.6" height="1.8" fill="#bdbdbd"/></svg>
<svg style="left:947.8px;top:144.5px" width="17" height="17" viewBox="0 0 17 17" ><rect x="1.5" y="1.5" width="14" height="14" fill="none" stroke="#aaa" stroke-width="1" stroke-dasharray="1.8 1.5"/><rect x="5" y="5" width="7" height="7" fill="#bdbdbd"/></svg>
<svg style="left:988.7px;top:148.5px" width="10" height="10" viewBox="-5 -5 10 10"><path d="M-3.7 -1.55 L0 2.15 L3.7 -1.55" fill="none" stroke="#ddd" stroke-width="1.4" stroke-linecap="round" stroke-linejoin="round"/></svg>
<svg style="left:1003.5px;top:144px" width="17" height="18" viewBox="0 0 17 18"><defs><linearGradient id="cubeg" x1="0.1" y1="0.1" x2="0.9" y2="0.9"><stop offset="0" stop-color="#22b2e2"/><stop offset="0.42" stop-color="#3cc456"/><stop offset="0.62" stop-color="#b0b030"/><stop offset="0.82" stop-color="#f03a22"/><stop offset="1" stop-color="#f0602a"/></linearGradient></defs><path d="M8.5 0.5 L16 4.8 V13.2 L8.5 17.5 L1 13.2 V4.8 Z" fill="url(#cubeg)"/></svg>
<div class="a" style="left:1028px;top:143px;width:20.5px;height:20px;background:#4366c2;border-radius:3px 0 0 3px;"></div>
<svg style="left:1030.8px;top:145.5px" width="15" height="15" viewBox="0 0 16 16" ><path d="M1 4.5 V1.5 H4.5 M11.5 1.5 H15 V4.5 M15 11.5 V14.5 H11.5 M4.5 14.5 H1 V11.5" fill="none" stroke="#fff" stroke-width="1.2"/><rect x="4" y="4" width="8" height="8" rx="0.8" fill="#fff"/></svg>
<div class="a" style="left:1049.0px;top:143px;width:20.6px;height:20px;background:#474747;border-radius:0;"></div>
<div class="a" style="left:1070.1px;top:143px;width:20.6px;height:20px;background:#474747;border-radius:0;"></div>
<div class="a" style="left:1091.2px;top:143px;width:20.6px;height:20px;background:#474747;border-radius:0;"></div>
<div class="a" style="left:1112.3px;top:143px;width:20.6px;height:20px;background:#474747;border-radius:0;"></div>
<div class="a" style="left:1133.4px;top:143px;width:20.6px;height:20px;background:#474747;border-radius:0;"></div>
<div class="a" style="left:1154.5px;top:143px;width:20.6px;height:20px;background:#474747;border-radius:0 3px 3px 0;"></div>
<svg style="left:1051.5px;top:145.0px" width="16" height="16" viewBox="0 0 16 16" ><circle cx="8" cy="8" r="6.3" fill="none" stroke="#cfcfcf" stroke-width="1.2"/><path d="M8 8 V1.7 A6.3 6.3 0 0 1 14.3 8 Z M8 8 H1.7 A6.3 6.3 0 0 0 4 12.8 Z M8 8 L12 13 A6.3 6.3 0 0 1 6 14 Z" fill="#cfcfcf"/></svg>
<svg style="left:1072.5px;top:145.0px" width="16" height="16" viewBox="0 0 16 16" ><path d="M5 1.5 Q9.5 8 8.5 10.5 Q7 13.5 4 12.5 Q0.5 11 2.2 7 Z" fill="#cfcfcf"/><circle cx="12" cy="3.2" r="1.8" fill="#cfcfcf"/><circle cx="11.2" cy="11.2" r="3.3" fill="none" stroke="#cfcfcf" stroke-width="1.2"/></svg>
<svg style="left:1093.7px;top:145.0px" width="16" height="16" viewBox="0 0 16 16" ><circle cx="7.5" cy="8.5" r="6" fill="none" stroke="#cfcfcf" stroke-width="1.2"/><path d="M4 5 Q6 4 7 6 Q8 8 6.5 9.5 Q5 11 6 13 M9 3 Q10 6 12 6.5 Q13 9 10.5 11" fill="none" stroke="#cfcfcf" stroke-width="1.4"/><path d="M12 3.5 L15 1" stroke="#cfcfcf" stroke-width="1.1"/></svg>
<svg style="left:1114.8px;top:145.0px" width="16" height="16" viewBox="0 0 16 16" ><path d="M6.5 1.5 H9.5 V7 H13.5 V10.5 H2.5 V7 H6.5 Z M2.5 12 H13.5 M4.5 12 V14.5 M8 12 V14.5 M11.5 12 V14.5" fill="none" stroke="#cfcfcf" stroke-width="1.2" stroke-linejoin="round"/></svg>
<svg style="left:1136.0px;top:145.0px" width="16" height="16" viewBox="0 0 16 16" ><rect x="2.5" y="1.5" width="8" height="5.2" rx="1.2" fill="#cfcfcf"/><rect x="4.2" y="3.4" width="4.6" height="1" fill="#222"/><rect x="1" y="9" width="8" height="5.2" rx="1.2" fill="#cfcfcf"/><rect x="2.7" y="10.9" width="4.6" height="1" fill="#222"/><path d="M11.5 3.5 H13.2 Q14.5 3.5 14.5 5 V11 Q14.5 12.3 13.2 12.3 H10.5 M12 10.6 L10.3 12.3 L12 14" fill="none" stroke="#cfcfcf" stroke-width="1.1"/></svg>
<svg style="left:1157.0px;top:145.0px" width="16" height="16" viewBox="0 0 16 16" ><path d="M4 1.5 H12 M8 1.5 V5 M5.5 3.5 L8 5.5 L10.5 3.5 M2 7.5 H11 Q13.5 7.5 13.5 9.3 Q13.5 11 11 11 H5 Q2.5 11 2.5 12.8 Q2.5 14.5 5 14.5 H14" fill="none" stroke="#cfcfcf" stroke-width="1.2"/></svg>
<div class="a" style="left:1180.5px;top:143px;width:242px;height:20px;background:#1b1b1b;border-radius:3px;"></div>
<svg style="left:1183.5px;top:145.0px" width="16" height="16" viewBox="0 0 16 16" ><circle cx="9.8" cy="6.2" r="4.6" fill="none" stroke="#d0d0d0" stroke-width="1.3"/><path d="M6.5 9.5 L1.5 14.5" stroke="#d0d0d0" stroke-width="1.5" stroke-linecap="round"/></svg>
<span class="t" style="transform:scaleX(1.007);left:1207.5px;top:145px;font-size:12px;color:#5e5e5e;">Search</span>
<div class="a" style="left:1424px;top:143px;width:23px;height:20px;background:#3c3c3c;border-radius:3px 0 0 3px;"></div>
<div class="a" style="left:1447.5px;top:143px;width:21px;height:20px;background:#3c3c3c;border-radius:0 3px 3px 0;"></div>
<svg style="left:1427.5px;top:145.0px" width="16" height="16" viewBox="0 0 16 16" ><path d="M2.5 7 Q8 13.5 13.5 7" fill="none" stroke="#c0c0c0" stroke-width="1.2"/></svg>
<svg style="left:1450.0px;top:145.0px" width="16" height="16" viewBox="0 0 16 16" ><path d="M4 1.5 H12 V14.5 L8 10.5 L4 14.5 Z" fill="#c8c8c8"/></svg>
<svg style="left:1473.5px;top:145.0px" width="16" height="16" viewBox="0 0 16 16" ><path d="M2 1.5 V12.5 H7 M2 5 H7" fill="none" stroke="#e8e8e8" stroke-width="1.3"/><rect x="7.5" y="2.5" width="7" height="5" rx=".8" fill="#e8e8e8"/><rect x="7.5" y="10" width="7" height="5" rx=".8" fill="#e8e8e8"/></svg>
<svg style="left:1493px;top:148.5px" width="10" height="10" viewBox="-5 -5 10 10"><path d="M-3.7 -1.55 L0 2.15 L3.7 -1.55" fill="none" stroke="#ddd" stroke-width="1.4" stroke-linecap="round" stroke-linejoin="round"/></svg>
<svg style="left:1508.0px;top:144.5px" width="17" height="17" viewBox="0 0 17 17" ><path d="M1 1.5 H16 L10.3 8.5 V13.5 L6.7 16 V8.5 Z" fill="#c8c8c8"/></svg>
<svg style="left:1528px;top:148.5px" width="10" height="10" viewBox="-5 -5 10 10"><path d="M-3.7 -1.55 L0 2.15 L3.7 -1.55" fill="none" stroke="#ddd" stroke-width="1.4" stroke-linecap="round" stroke-linejoin="round"/></svg>
<svg style="left:1543.5px;top:144.5px" width="17" height="17" viewBox="0 0 17 17" ><path d="M8.5 0.8 Q11.5 2.5 15 2.5 V8.5 Q15 13 8.5 16.2 Q2 13 2 8.5 V2.5 Q5.5 2.5 8.5 0.8 Z" fill="#d8d8d8"/><path d="M5.3 8.3 L7.8 10.8 L12 6" fill="none" stroke="#2a2a2a" stroke-width="1.7"/></svg>
<div class="a" style="left:860.5px;top:177.5px;width:43px;height:75.5px;border-radius:4px;overflow:hidden;background:#151515"><svg style="left:0;top:0px" width="43" height="36.8" viewBox="0 0 43 36.8"><rect width="43" height="36.8" fill="#4366c2"/><rect x="8.7" y="6.5" width="24.6" height="24" fill="none" stroke="#f5a623" stroke-width="1.7" stroke-dasharray="3.3 2.1"/><path d="M17.6 11.6 V24.6 L20.8 21.6 L23.2 26.6 L25.6 25.4 L23.3 20.6 L27.6 20.2 Z" fill="#e4e4e4"/><path d="M41 30.299999999999997 V34.8 H36.5 Z" fill="#9ab0e0"/></svg><svg style="left:0;top:38.8px" width="43" height="36.7" viewBox="0 0 43 36.7"><rect width="43" height="36.7" fill="#222222"/><circle cx="21.5" cy="18.6" r="12" fill="none" stroke="#b0323f" stroke-width="2"/><circle cx="21.5" cy="18.6" r="12" fill="none" stroke="#e6e6e6" stroke-width="2" stroke-dasharray="4.71 4.71" stroke-dashoffset="2.3"/><path d="M13.5 18.6 H19.2 M23.8 18.6 H29.5 M21.5 10.6 V16.3 M21.5 20.9 V26.6" stroke="#c4c4c4" stroke-width="1.3"/></svg></div>
<div class="a" style="left:860.5px;top:261.5px;width:43px;height:153.5px;border-radius:4px;overflow:hidden;background:#151515"><svg style="left:0;top:0px" width="43" height="36.9" viewBox="0 0 43 36.9"><rect width="43" height="36.9" fill="#222222"/><path d="M21.3 5 L25 10.6 H17.6 Z M21.3 32 L25 26.4 H17.6 Z M7.8 18.5 L13.4 14.8 V22.2 Z M34.8 18.5 L29.2 14.8 V22.2 Z" fill="#e6e6e6"/><path d="M21.3 11.5 V15 M21.3 22 V25.5 M14.3 18.5 H17.8 M24.8 18.5 H28.3" stroke="#e6e6e6" stroke-width="2"/></svg><svg style="left:0;top:38.8px" width="43" height="36.9" viewBox="0 0 43 36.9"><rect width="43" height="36.9" fill="#222222"/><path d="M11.6 16.5 A10.2 10.2 0 0 1 30.5 14.5 M31 21 A10.2 10.2 0 0 1 12 23" fill="none" stroke="#e6e6e6" stroke-width="1.6"/><path d="M7 17.2 H15 L11 23.2 Z M27.5 21 H35.5 L31.5 15 Z" fill="#e6e6e6"/><path d="M21.3 14 L26 18.7 L21.3 23.4 L16.6 18.7 Z" fill="#b8b8b8"/></svg><svg style="left:0;top:77.6px" width="43" height="36.9" viewBox="0 0 43 36.9"><rect width="43" height="36.9" fill="#222222"/><rect x="11.3" y="9.2" width="19" height="19" fill="none" stroke="#a8a8a8" stroke-width="1.5"/><rect x="10.5" y="18.3" width="11.3" height="11" fill="#e6e6e6" stroke="#222" stroke-width="0.8"/><path d="M21.5 18.6 L27.3 12.8" stroke="#e6e6e6" stroke-width="1.6"/><path d="M23.6 11.6 H28.6 V16.6 Z" fill="#e6e6e6"/><path d="M41 30.4 V34.9 H36.5 Z" fill="#8a8a8a"/></svg><svg style="left:0;top:116.4px" width="43" height="37.1" viewBox="0 0 43 37.1"><rect width="43" height="37.1" fill="#222222"/><circle cx="21.3" cy="18.8" r="11.5" fill="none" stroke="#e6e6e6" stroke-width="1.5" stroke-dasharray="9.03 9.03" stroke-dashoffset="-4.5"/><rect x="17" y="14.5" width="8.6" height="8.6" fill="#e6e6e6"/><path d="M21.3 6.6 L24.3 11 H18.3 Z M21.3 31 L24.3 26.6 H18.3 Z M9.1 18.8 L13.5 15.8 V21.8 Z M33.5 18.8 L29.1 15.8 V21.8 Z" fill="#e6e6e6"/></svg></div>
<div class="a" style="left:860.5px;top:425.5px;width:43px;height:76px;border-radius:4px;overflow:hidden;background:#151515"><svg style="left:0;top:0px" width="43" height="36.9" viewBox="0 0 43 36.9"><rect width="43" height="36.9" fill="#222222"/><path d="M13.2 17.8 L25.2 5.8 L29.4 10 L17.4 22 Z" fill="#e6e6e6"/><path d="M12.4 18.8 L16.4 22.8 L9.6 25 Z" fill="#cfcfcf"/><path d="M24 7 L28.2 11.2" stroke="#222" stroke-width="1"/><path d="M9.5 26 C15 28.5 19.5 25.5 23 22 C27 18.3 31.5 19.5 34.5 25.5" fill="none" stroke="#79d99a" stroke-width="1.7"/><path d="M41 30.4 V34.9 H36.5 Z" fill="#8a8a8a"/></svg><svg style="left:0;top:38.8px" width="43" height="37.2" viewBox="0 0 43 37.2"><rect width="43" height="37.2" fill="#222222"/><path d="M15.8 12.3 A13.5 13.5 0 0 1 29.3 25.8 H15.8 Z" fill="#79d99a" stroke="#3fa868" stroke-width="1.2"/><path d="M11 4.5 H15.8 V25.6 H33.8 V30.4 H11 Z" fill="#e6e6e6"/><path d="M13.6 7 H15.8 M13.6 10 H15.8 M13.6 13 H15.8 M13.6 16 H15.8 M13.6 19 H15.8 M13.6 22 H15.8 M18 28 V25.6 M21 28 V25.6 M24 28 V25.6 M27 28 V25.6 M30 28 V25.6" stroke="#555" stroke-width="0.9"/></svg></div>
<div class="a" style="left:860.5px;top:510px;width:43px;height:36.5px;border-radius:4px;overflow:hidden;background:#151515"><svg style="left:0;top:0px" width="43" height="36.5" viewBox="0 0 43 36.5"><rect width="43" height="36.5" fill="#222222"/><path d="M12.8 14.8 H28.3 V30 H12.8 Z M12.8 14.8 L18 9.6 H33.5 L28.3 14.8 M33.5 9.6 V24.8 L28.3 30" fill="none" stroke="#79d99a" stroke-width="1.5" stroke-linejoin="round"/><path d="M10.5 2.6 V11 M6.3 6.8 H14.7" stroke="#79d99a" stroke-width="2.3"/><path d="M41 30.0 V34.5 H36.5 Z" fill="#8a8a8a"/></svg></div>
<span class="t" style="transform:scaleX(1.051);left:925px;top:177.5px;font-size:12px;color:#f0f0f0;text-shadow:0 0 2px #000;">User Perspective</span>
<span class="t" style="transform:scaleX(1.082);left:925px;top:197.5px;font-size:12px;color:#f0f0f0;text-shadow:0 0 2px #000;">(1) Scene Collection | Grid</span>
<svg style="left:1581px;top:185px" width="10" height="10" viewBox="-5 -5 10 10"><path d="M1.7 -3.4 L-1.7 0 L1.7 3.4" fill="none" stroke="#999" stroke-width="1.3" stroke-linecap="round" stroke-linejoin="round"/></svg>
<svg style="left:0;top:0" width="1920" height="400"><path d="M1533.6 223.3 L1534 195" stroke="#3a7be0" stroke-width="2"/><path d="M1533.6 223.3 L1503 213.4" stroke="#c8324e" stroke-width="2"/><path d="M1533.6 223.3 L1516 242.3" stroke="#7cc010" stroke-width="2"/><circle cx="1551.8" cy="205.5" r="7.8" fill="#3d4a26" stroke="#6e901f" stroke-width="1.5"/><circle cx="1565.3" cy="234.4" r="8.4" fill="#5c2a3a" stroke="#de2f5a" stroke-width="1.6"/><circle cx="1534" cy="253" r="7.8" fill="#2c3c5c" stroke="#3768bb" stroke-width="1.5"/><circle cx="1534" cy="194.6" r="9.3" fill="#3a7fe8"/><circle cx="1503" cy="213.4" r="9.3" fill="#cf2f4e"/><circle cx="1516" cy="242.3" r="9.3" fill="#7dc312"/></svg>
<span class="t" style="left:1530.2px;top:186.8px;font-size:10.5px;color:#0a1a30;font-weight:bold;">Z</span>
<span class="t" style="left:1499.6px;top:205.6px;font-size:10.5px;color:#30080f;font-weight:bold;">X</span>
<span class="t" style="left:1512.6px;top:234.5px;font-size:10.5px;color:#102800;font-weight:bold;">Y</span>
<div class="a" style="left:1552.3px;top:272.5px;width:26px;height:26px;border-radius:13px;background:#2a2a2a"></div>
<div class="a" style="left:1552.3px;top:306.5px;width:26px;height:26px;border-radius:13px;background:#2a2a2a"></div>
<div class="a" style="left:1552.3px;top:341px;width:26px;height:26px;border-radius:13px;background:#2a2a2a"></div>
<div class="a" style="left:1552.3px;top:374.6px;width:26px;height:26px;border-radius:13px;background:#2a2a2a"></div>
<svg style="left:1555.3px;top:275.5px" width="20" height="20" viewBox="0 0 20 20" ><circle cx="12.3" cy="7.8" r="6" fill="#e6e6e6"/><path d="M12.3 4.6 V11 M9.1 7.8 H15.5" stroke="#2a2a2a" stroke-width="1.5"/><path d="M7.6 12.4 L2.4 17.6" stroke="#e6e6e6" stroke-width="2.4" stroke-linecap="round"/></svg>
<svg style="left:1555.3px;top:309.5px" width="20" height="20" viewBox="0 0 20 20" ><path d="M6.2 10.5 L4.6 4.2 M9 9.5 L8.4 2 M11.8 9.5 L12.6 2.2 M14.4 10.5 L16.4 4.4" stroke="#e6e6e6" stroke-width="2.3" stroke-linecap="round" fill="none"/><path d="M5.4 9.5 H15 L14.6 14 Q13.6 18.6 10 18.6 Q7.2 18.6 5.6 16 L1.8 10.6 Q1.4 9.4 2.6 9 Q3.6 8.8 4.4 9.8 L6 12 Z" fill="#e6e6e6"/></svg>
<svg style="left:1556.3px;top:345.0px" width="18" height="18" viewBox="0 0 18 18" ><circle cx="5" cy="4.5" r="3" fill="none" stroke="#e6e6e6" stroke-width="1.3"/><circle cx="11.5" cy="4.5" r="3" fill="none" stroke="#e6e6e6" stroke-width="1.3"/><rect x="3" y="8.5" width="9.5" height="6.5" rx="1" fill="none" stroke="#e6e6e6" stroke-width="1.3"/><path d="M13.5 11.5 L17 9.5 V14.5 L13.5 12.5 Z" fill="none" stroke="#e6e6e6" stroke-width="1.1"/><path d="M6 15 L4.5 17.5 M9.5 15 L11 17.5" stroke="#e6e6e6" stroke-width="1.1"/></svg>
<svg style="left:1556.3px;top:378.6px" width="18" height="18" viewBox="0 0 18 18" ><path d="M4.5 2 H13.5 L16.5 16 H1.5 Z M7.5 2 L6.5 16 M10.5 2 L11.5 16 M3.7 6 H14.3 M2.7 10.5 H15.3" fill="none" stroke="#e6e6e6" stroke-width="1.2" stroke-linejoin="round"/></svg>
<!-- RIGHT -->
<div class="a" style="left:1594px;top:110px;width:326px;height:355.5px;background:#232323;border-radius:6px 0 0 6px;"></div>
<div class="a" style="left:1594px;top:110px;width:326px;height:28px;background:#262626;border-radius:6px 0 0 0;"></div>
<div class="a" style="left:1594px;top:139.5px;width:326px;height:22.5px;background:#151515;"></div>
<div class="a" style="left:1594px;top:162px;width:326px;height:22.3px;background:#242424;"></div>
<div class="a" style="left:1594px;top:184.3px;width:326px;height:22.2px;background:#2d4379;"></div>
<div class="a" style="left:1594px;top:206.5px;width:326px;height:22.5px;background:#242424;"></div>
<svg style="left:1608.0px;top:116.0px" width="16" height="16" viewBox="0 0 16 16" ><rect x="1.5" y="1" width="5" height="3.2" fill="#e0e0e0"/><path d="M3 4 V13 H8 M3 8 H8" fill="none" stroke="#e0e0e0" stroke-width="1.2"/><rect x="8" y="6.2" width="6.5" height="3.4" rx=".6" fill="#e0e0e0"/><rect x="8" y="11.2" width="6.5" height="3.4" rx=".6" fill="#e0e0e0"/></svg>
<svg style="left:1626px;top:120px" width="10" height="10" viewBox="-5 -5 10 10"><path d="M-3.7 -1.55 L0 2.15 L3.7 -1.55" fill="none" stroke="#ddd" stroke-width="1.4" stroke-linecap="round" stroke-linejoin="round"/></svg>
<svg style="left:1649.5px;top:116.0px" width="16" height="16" viewBox="0 0 16 16" ><g fill="none" stroke="#e0e0e0" stroke-width="1.1"><path d="M3.5 6 H2 V14.5 H11 V13"/><path d="M5 4 H3.5 V13 H12.5 V11.5"/><rect x="5.5" y="1.5" width="9" height="9.5" fill="#151515"/></g><path d="M6.5 10 L9.3 5.2 L11 8 L12 6.8 L13.5 10 Z" fill="#e0e0e0"/><circle cx="12.3" cy="3.9" r="0.9" fill="#e0e0e0"/></svg>
<svg style="left:1667.5px;top:120px" width="10" height="10" viewBox="-5 -5 10 10"><path d="M-3.7 -1.55 L0 2.15 L3.7 -1.55" fill="none" stroke="#ddd" stroke-width="1.4" stroke-linecap="round" stroke-linejoin="round"/></svg>
<div class="a" style="left:1700px;top:114.5px;width:125px;height:19.5px;background:#1a1a1a;border-radius:3px;border:1px solid #2a2a2a;"></div>
<svg style="left:1703.0px;top:116.3px" width="16" height="16" viewBox="0 0 16 16" ><circle cx="9.8" cy="6.2" r="4.6" fill="none" stroke="#d0d0d0" stroke-width="1.3"/><path d="M6.5 9.5 L1.5 14.5" stroke="#d0d0d0" stroke-width="1.5" stroke-linecap="round"/></svg>
<span class="t" style="transform:scaleX(0.999);left:1727.6px;top:116.2px;font-size:12px;color:#5a5a5a;">Search</span>
<svg style="left:1859.0px;top:115.8px" width="17" height="17" viewBox="0 0 17 17" ><path d="M1.5 1.8 H15.5 L10 8.5 V15.5 L7 13 V8.5 Z" fill="none" stroke="#e0e0e0" stroke-width="1.2" stroke-linejoin="round"/></svg>
<svg style="left:1879.7px;top:120px" width="10" height="10" viewBox="-5 -5 10 10"><path d="M-3.7 -1.55 L0 2.15 L3.7 -1.55" fill="none" stroke="#ddd" stroke-width="1.4" stroke-linecap="round" stroke-linejoin="round"/></svg>
<div class="a" style="left:1899px;top:114px;width:21px;height:21px;background:#404040;border-radius:4px 0 0 4px;"></div>
<svg style="left:1901.3px;top:116.0px" width="17" height="17" viewBox="0 0 17 17" ><rect x="2" y="3" width="10.5" height="3" fill="none" stroke="#bbb" stroke-width="1.1"/><path d="M3 6 V15 H12 V9.5" fill="none" stroke="#bbb" stroke-width="1.1"/><path d="M5.5 9.5 H9.5" stroke="#bbb" stroke-width="1.1"/><circle cx="13" cy="4.2" r="3.6" fill="#404040" stroke="#e8e8e8" stroke-width="1.1"/><path d="M13 2.2 V6.2 M11 4.2 H15" stroke="#e8e8e8" stroke-width="1.1"/></svg>
<div class="a" style="left:1616.5px;top:141px;width:20px;height:20px;background:#2c2c2c;border-radius:4px;border:1px solid #3a3a3a;"></div>
<svg style="left:1619.0px;top:143.5px" width="15" height="15" viewBox="0 0 16 16" ><rect x="1.5" y="1.5" width="13" height="3.6" fill="#e4e4e4"/><path d="M2.5 6 H13.5 V14.5 H2.5 Z" fill="#e4e4e4"/><rect x="6" y="7.6" width="4" height="1.6" fill="#222"/></svg>
<span class="t" style="transform:scaleX(1.066);left:1642.5px;top:143px;font-size:12px;color:#e0e0e0;">Scene Collection</span>
<svg style="left:1641.0px;top:165.0px" width="16" height="16" viewBox="0 0 16 16" ><rect x="1.5" y="1.5" width="13" height="3.6" fill="#e4e4e4"/><path d="M2.5 6 H13.5 V14.5 H2.5 Z" fill="#e4e4e4"/><rect x="6" y="7.6" width="4" height="1.6" fill="#222"/></svg>
<span class="t" style="transform:scaleX(1.082);left:1665px;top:165.5px;font-size:12px;color:#e0e0e0;">Collection</span>
<svg style="left:1855.1px;top:166.5px" width="13" height="13" viewBox="0 0 13 13" ><rect x="0.5" y="0.5" width="12" height="12" rx="1.5" fill="#f0f0f0"/><path d="M3 6.5 L5.6 9.2 L10.2 3.6" fill="none" stroke="#1a1a1a" stroke-width="1.8"/></svg>
<svg style="left:1876.0px;top:165.0px" width="16" height="16" viewBox="0 0 16 16" ><path d="M0.8 8 Q8 0.5 15.2 8 Q8 15.5 0.8 8 Z" fill="none" stroke="#e8e8e8" stroke-width="1.4"/><circle cx="8" cy="8" r="2.9" fill="#e8e8e8"/></svg>
<svg style="left:1899.0px;top:165.0px" width="16" height="16" viewBox="0 0 16 16" ><path d="M1 4.5 H4.5 L6 2.2 H10 L11.5 4.5 H15 V14 H1 Z" fill="#e8e8e8"/><circle cx="8" cy="9" r="3.6" fill="#242424"/><circle cx="8" cy="9" r="2.1" fill="none" stroke="#e8e8e8" stroke-width="1.1"/></svg>
<svg style="left:1622px;top:191px" width="10" height="10" viewBox="-5 -5 10 10"><path d="M-2.4 -4.8 L2.4 0 L-2.4 4.8" fill="none" stroke="#ddd" stroke-width="1.3" stroke-linecap="round" stroke-linejoin="round"/></svg>
<div class="a" style="left:1638.5px;top:185.3px;width:21px;height:20.5px;background:#48597f;border-radius:4px;border:1px solid #5a6a90;"></div>
<svg style="left:1641.5px;top:188.5px" width="15" height="15" viewBox="0 0 16 16" ><path d="M2 2.5 H14 L8 14 Z" fill="none" stroke="#f29238" stroke-width="3" stroke-linejoin="round"/></svg>
<span class="t" style="transform:scaleX(1.014);left:1665px;top:188px;font-size:12px;color:#f5a52f;">Grid</span>
<svg style="left:1714.0px;top:187.5px" width="16" height="16" viewBox="0 0 16 16" ><path d="M11.8 1.8 Q9 1.2 7.8 3.6 Q7 5.2 7.8 6.6 L2.2 12 Q1.2 13.2 2.2 14.2 Q3.2 15 4.3 14 L9.8 8.4 Q11.4 9 12.8 8.2 Q14.8 7 14.4 4.4 L12.2 6.4 L10 4.2 Z" fill="none" stroke="#5577e0" stroke-width="1.3" stroke-linejoin="round"/></svg>
<svg style="left:1737.0px;top:187.5px" width="16" height="16" viewBox="0 0 16 16" ><path d="M3 3 H13 L8 13.5 Z" fill="none" stroke="#26c0b0" stroke-width="1.2"/><rect x="1.2" y="1.2" width="3.4" height="3.4" fill="#222" stroke="#26c0b0" stroke-width="1.2"/><rect x="11.4" y="1.2" width="3.4" height="3.4" fill="#222" stroke="#26c0b0" stroke-width="1.2"/><rect x="6.3" y="11.6" width="3.4" height="3.4" fill="#222" stroke="#26c0b0" stroke-width="1.2"/></svg>
<svg style="left:1876.0px;top:187.5px" width="16" height="16" viewBox="0 0 16 16" ><path d="M0.8 8 Q8 0.5 15.2 8 Q8 15.5 0.8 8 Z" fill="none" stroke="#e8e8e8" stroke-width="1.4"/><circle cx="8" cy="8" r="2.9" fill="#e8e8e8"/></svg>
<svg style="left:1899.0px;top:187.5px" width="16" height="16" viewBox="0 0 16 16" ><path d="M1 4.5 H4.5 L6 2.2 H10 L11.5 4.5 H15 V14 H1 Z" fill="#e8e8e8"/><circle cx="8" cy="9" r="3.6" fill="#2d4379"/><circle cx="8" cy="9" r="2.1" fill="none" stroke="#e8e8e8" stroke-width="1.1"/></svg>
<svg style="left:1622px;top:213.5px" width="10" height="10" viewBox="-5 -5 10 10"><path d="M-2.4 -4.8 L2.4 0 L-2.4 4.8" fill="none" stroke="#ddd" stroke-width="1.3" stroke-linecap="round" stroke-linejoin="round"/></svg>
<svg style="left:1641.5px;top:211.0px" width="15" height="15" viewBox="0 0 16 16" ><path d="M2 2.5 H14 L8 14 Z" fill="none" stroke="#e0873a" stroke-width="3" stroke-linejoin="round"/></svg>
<span class="t" style="transform:scaleX(1.041);left:1665px;top:210.5px;font-size:12px;color:#e0e0e0;">Hex Dome</span>
<svg style="left:1754.0px;top:210.0px" width="16" height="16" viewBox="0 0 16 16" ><path d="M11.8 1.8 Q9 1.2 7.8 3.6 Q7 5.2 7.8 6.6 L2.2 12 Q1.2 13.2 2.2 14.2 Q3.2 15 4.3 14 L9.8 8.4 Q11.4 9 12.8 8.2 Q14.8 7 14.4 4.4 L12.2 6.4 L10 4.2 Z" fill="none" stroke="#5577e0" stroke-width="1.3" stroke-linejoin="round"/></svg>
<svg style="left:1776.0px;top:210.0px" width="16" height="16" viewBox="0 0 16 16" ><path d="M3 3 H13 L8 13.5 Z" fill="none" stroke="#2fc48c" stroke-width="1.2"/><rect x="1.2" y="1.2" width="3.4" height="3.4" fill="#222" stroke="#2fc48c" stroke-width="1.2"/><rect x="11.4" y="1.2" width="3.4" height="3.4" fill="#222" stroke="#2fc48c" stroke-width="1.2"/><rect x="6.3" y="11.6" width="3.4" height="3.4" fill="#222" stroke="#2fc48c" stroke-width="1.2"/></svg>
<svg style="left:1876.0px;top:210.0px" width="16" height="16" viewBox="0 0 16 16" ><path d="M0.8 8 Q8 0.5 15.2 8 Q8 15.5 0.8 8 Z" fill="none" stroke="#e8e8e8" stroke-width="1.4"/><circle cx="8" cy="8" r="2.9" fill="#e8e8e8"/></svg>
<svg style="left:1899.0px;top:210.0px" width="16" height="16" viewBox="0 0 16 16" ><path d="M1 4.5 H4.5 L6 2.2 H10 L11.5 4.5 H15 V14 H1 Z" fill="#e8e8e8"/><circle cx="8" cy="9" r="3.6" fill="#242424"/><circle cx="8" cy="9" r="2.1" fill="none" stroke="#e8e8e8" stroke-width="1.1"/></svg>
<div class="a" style="left:1594px;top:471.5px;width:326px;height:608.5px;background:#232323;border-radius:6px 0 0 0;"></div>
<div class="a" style="left:1594px;top:471.5px;width:326px;height:27px;background:#262626;border-radius:6px 0 0 0;"></div>
<div class="a" style="left:1595.5px;top:499px;width:30.5px;height:581px;background:#181818;"></div>
<div class="a" style="left:1596.5px;top:582.5px;width:29.5px;height:28.5px;background:#262626;border-radius:4px 0 0 4px;"></div>
<svg style="left:1607.0px;top:476.5px" width="17" height="17" viewBox="0 0 17 17" ><rect x="1" y="2" width="15" height="5.6" rx="2.8" fill="#ececec"/><rect x="1" y="9.6" width="15" height="5.6" rx="2.8" fill="#ececec"/><rect x="8.5" y="3.4" width="5.6" height="2.8" rx="1.2" fill="#262626"/><rect x="11.2" y="11" width="3" height="2.8" rx="1.2" fill="#262626"/></svg>
<svg style="left:1626px;top:480.5px" width="10" height="10" viewBox="-5 -5 10 10"><path d="M-3.7 -1.55 L0 2.15 L3.7 -1.55" fill="none" stroke="#ddd" stroke-width="1.4" stroke-linecap="round" stroke-linejoin="round"/></svg>
<div class="a" style="left:1697px;top:475.5px;width:125.5px;height:19.5px;background:#1a1a1a;border-radius:3px;border:1px solid #2a2a2a;"></div>
<svg style="left:1701.0px;top:477.3px" width="16" height="16" viewBox="0 0 16 16" ><circle cx="9.8" cy="6.2" r="4.6" fill="none" stroke="#d0d0d0" stroke-width="1.3"/><path d="M6.5 9.5 L1.5 14.5" stroke="#d0d0d0" stroke-width="1.5" stroke-linecap="round"/></svg>
<span class="t" style="transform:scaleX(1.010);left:1725px;top:477px;font-size:12px;color:#555;">Search</span>
<div class="a" style="left:1900px;top:475.5px;width:20px;height:19.5px;background:#1f1f1f;border-radius:3px 0 0 3px;"></div>
<svg style="left:1904.7px;top:481px" width="10" height="10" viewBox="-5 -5 10 10"><path d="M-3.7 -1.55 L0 2.15 L3.7 -1.55" fill="none" stroke="#ddd" stroke-width="1.4" stroke-linecap="round" stroke-linejoin="round"/></svg>
<svg style="left:1637.3px;top:511.70000000000005px" width="16" height="16" viewBox="0 0 16 16" ><path d="M1 4.5 V1.5 H4.5 M11.5 1.5 H15 V4.5 M15 11.5 V14.5 H11.5 M4.5 14.5 H1 V11.5" fill="none" stroke="#d8d8d8" stroke-width="1.2"/><rect x="4" y="4" width="8" height="8" rx="0.8" fill="#eaeaea"/></svg>
<span class="t" style="transform:scaleX(1.041);left:1664px;top:512px;font-size:12px;color:#e4e4e4;">Hex Dome</span>
<svg style="left:1740.6px;top:515px" width="10" height="10" viewBox="-5 -5 10 10"><path d="M-2.4 -4.8 L2.4 0 L-2.4 4.8" fill="none" stroke="#d0d0d0" stroke-width="1.3" stroke-linecap="round" stroke-linejoin="round"/></svg>
<svg style="left:1759.5px;top:511.5px" width="17" height="17" viewBox="0 0 16 16" ><circle cx="2.8" cy="2.8" r="1.6" fill="#d0d0d0" opacity=".6"/><circle cx="7.8" cy="3.3" r="1.7" fill="#d0d0d0" opacity=".6"/><circle cx="4.8" cy="8.2" r="2.5" fill="#d0d0d0" opacity=".9"/><circle cx="11.8" cy="11.6" r="3.9" fill="#f0f0f0"/></svg>
<span class="t" style="transform:scaleX(1.030);left:1786.5px;top:512px;font-size:12px;color:#e4e4e4;">Grid Parameter</span>
<svg style="left:1902.0px;top:511.5px" width="16" height="16" viewBox="0 0 16 16" ><path d="M9.8 1.2 L14.8 6.2 L12.8 7 L11 9.4 L10.6 12 L4 5.4 L6.6 5 L9 3.2 Z" fill="#f0f0f0"/><path d="M7 9 L1.5 14.5" stroke="#f0f0f0" stroke-width="1.6"/></svg>
<div class="a" style="left:1635px;top:550.5px;width:285px;height:20.5px;background:#3c3c3c;border-radius:4px 0 0 4px;"></div>
<svg style="left:1642px;top:555px" width="11" height="11" viewBox="0 0 11 11"><path d="M5.5 0.5 V10.5 M0.5 5.5 H10.5" stroke="#e8e8e8" stroke-width="1.1"/></svg>
<span class="t" style="transform:scaleX(1.078);left:1751.8px;top:552.7px;font-size:12px;color:#e8e8e8;">Add Modifier</span>
<div class="a" style="left:1635px;top:584.5px;width:285px;height:26.5px;background:#2a2a2a;border-radius:4px 0 0 4px;"></div>
<svg style="left:1644px;top:592.7px" width="10" height="10" viewBox="-5 -5 10 10"><path d="M-2.5 -5 L2.5 0 L-2.5 5" fill="none" stroke="#ddd" stroke-width="1.3" stroke-linecap="round" stroke-linejoin="round"/></svg>
<svg style="left:1660.3px;top:589.7px" width="16" height="16" viewBox="0 0 16 16" ><rect x="1.5" y="1.5" width="13" height="13" fill="none" stroke="#bdbdbd" stroke-width="1"/><circle cx="8" cy="8" r="4.6" fill="none" stroke="#e8e8e8" stroke-width="1.3"/></svg>
<div class="a" style="left:1690px;top:587.4000000000001px;width:62px;height:20.6px;background:#151515;border-radius:4px 0 0 4px;"></div>
<span class="t" style="transform:scaleX(1.056);left:1697.6px;top:589.7px;font-size:12px;color:#e8e8e8;">Subdiv...</span>
<div class="a" style="left:1752px;top:587.4000000000001px;width:22px;height:20.6px;background:#3c3c3c;"></div>
<svg style="left:1755.5px;top:590.2px" width="15" height="15" viewBox="0 0 16 16" ><path d="M3 3 H13 L8 13.5 Z" fill="none" stroke="#e8e8e8" stroke-width="1.1"/><rect x="1.2" y="1.2" width="3.4" height="3.4" fill="#3c3c3c" stroke="#e8e8e8" stroke-width="1.1"/><rect x="11.4" y="1.2" width="3.4" height="3.4" fill="#3c3c3c" stroke="#e8e8e8" stroke-width="1.1"/><rect x="6.3" y="11.6" width="3.4" height="3.4" fill="#3c3c3c" stroke="#e8e8e8" stroke-width="1.1"/></svg>
<div class="a" style="left:1774.3px;top:587.4000000000001px;width:22.2px;height:20.6px;background:#4366c2;"></div>
<div class="a" style="left:1797px;top:587.4000000000001px;width:22.2px;height:20.6px;background:#4366c2;"></div>
<div class="a" style="left:1819.7px;top:587.4000000000001px;width:22.2px;height:20.6px;background:#4366c2;"></div>
<svg style="left:1777.8px;top:590.2px" width="15" height="15" viewBox="0 0 15 15" ><rect x="3" y="3" width="9.5" height="9.5" fill="none" stroke="#fff" stroke-width="1"/><rect x="1.2" y="10.2" width="3.4" height="3.4" fill="#4366c2" stroke="#fff" stroke-width="1"/><rect x="1.2" y="1.4" width="3.4" height="3.4" fill="#4366c2" stroke="#fff" stroke-width="1"/><rect x="10.6" y="10.2" width="3.4" height="3.4" fill="#4366c2" stroke="#fff" stroke-width="1"/><rect x="9.6" y="0.6" width="5" height="5" fill="#fff"/></svg>
<svg style="left:1800.5px;top:590.2px" width="15" height="15" viewBox="0 0 15 15" ><rect x="1" y="2" width="13" height="8.6" rx="1" fill="none" stroke="#fff" stroke-width="1.2"/><rect x="3" y="4" width="9" height="4.6" fill="#fff"/><path d="M7.5 10.6 V13 M4 13.3 H11" stroke="#fff" stroke-width="1.3"/></svg>
<svg style="left:1822.8px;top:589.7px" width="16" height="16" viewBox="0 0 16 16" ><path d="M1 4.5 H4.5 L6 2.2 H10 L11.5 4.5 H15 V14 H1 Z" fill="#fff"/><circle cx="8" cy="9" r="3.6" fill="#4366c2"/><circle cx="8" cy="9" r="2.1" fill="none" stroke="#fff" stroke-width="1.1"/></svg>
<div class="a" style="left:1842.3px;top:587.4000000000001px;width:21.7px;height:20.6px;background:#151515;border-radius:0 4px 4px 0;"></div>
<svg style="left:1848px;top:593.2px" width="10" height="10" viewBox="-5 -5 10 10"><path d="M-4.4 -1.9000000000000001 L0 2.5 L4.4 -1.9000000000000001" fill="none" stroke="#e8e8e8" stroke-width="1.4" stroke-linecap="round" stroke-linejoin="round"/></svg>
<svg style="left:1870.3px;top:591.7px" width="12" height="12" viewBox="-6 -6 12 12"><path d="M-3.8 -3.8 L3.8 3.8 M3.8 -3.8 L-3.8 3.8" stroke="#e0e0e0" stroke-width="1.3" stroke-linecap="round" fill="none"/></svg>
<svg style="left:1902px;top:594.7px" width="12" height="6" viewBox="0 0 12 6"><g fill="#4a4a4a"><circle cx="1.5" cy="1.2" r=".8"/><circle cx="4.5" cy="1.2" r=".8"/><circle cx="7.5" cy="1.2" r=".8"/><circle cx="10.5" cy="1.2" r=".8"/><circle cx="1.5" cy="4.4" r=".8"/><circle cx="4.5" cy="4.4" r=".8"/><circle cx="7.5" cy="4.4" r=".8"/><circle cx="10.5" cy="4.4" r=".8"/></g></svg>
<div class="a" style="left:1635px;top:613.5px;width:290px;height:92px;background:#262626;border:1px solid #3b5eae;border-radius:4px"></div>
<svg style="left:1643.7px;top:623.5px" width="10" height="10" viewBox="-5 -5 10 10"><path d="M-4.7 -2.0500000000000003 L0 2.65 L4.7 -2.0500000000000003" fill="none" stroke="#ddd" stroke-width="1.3" stroke-linecap="round" stroke-linejoin="round"/></svg>
<svg style="left:1660.5px;top:619.5px" width="17" height="17" viewBox="0 0 16 16" ><circle cx="2.8" cy="2.8" r="1.6" fill="#e05a66" opacity=".6"/><circle cx="7.8" cy="3.3" r="1.7" fill="#e05a66" opacity=".6"/><circle cx="4.8" cy="8.2" r="2.5" fill="#e05a66" opacity=".9"/><circle cx="11.8" cy="11.6" r="3.9" fill="#f0606c"/></svg>
<div class="a" style="left:1690px;top:617.7px;width:84px;height:20.6px;background:#151515;border-radius:4px 0 0 4px;"></div>
<span class="t" style="transform:scaleX(1.014);left:1697.6px;top:620px;font-size:12px;color:#e8e8e8;">Grid Para...</span>
<div class="a" style="left:1774.3px;top:617.7px;width:22.2px;height:20.6px;background:#4366c2;"></div>
<div class="a" style="left:1797px;top:617.7px;width:22.2px;height:20.6px;background:#4366c2;"></div>
<div class="a" style="left:1819.7px;top:617.7px;width:22.2px;height:20.6px;background:#4366c2;"></div>
<svg style="left:1777.8px;top:620.5px" width="15" height="15" viewBox="0 0 15 15" ><rect x="3" y="3" width="9.5" height="9.5" fill="none" stroke="#fff" stroke-width="1"/><rect x="1.2" y="10.2" width="3.4" height="3.4" fill="#4366c2" stroke="#fff" stroke-width="1"/><rect x="1.2" y="1.4" width="3.4" height="3.4" fill="#4366c2" stroke="#fff" stroke-width="1"/><rect x="10.6" y="10.2" width="3.4" height="3.4" fill="#4366c2" stroke="#fff" stroke-width="1"/><rect x="9.6" y="0.6" width="5" height="5" fill="#fff"/></svg>
<svg style="left:1800.5px;top:620.5px" width="15" height="15" viewBox="0 0 15 15" ><rect x="1" y="2" width="13" height="8.6" rx="1" fill="none" stroke="#fff" stroke-width="1.2"/><rect x="3" y="4" width="9" height="4.6" fill="#fff"/><path d="M7.5 10.6 V13 M4 13.3 H11" stroke="#fff" stroke-width="1.3"/></svg>
<svg style="left:1822.8px;top:620.0px" width="16" height="16" viewBox="0 0 16 16" ><path d="M1 4.5 H4.5 L6 2.2 H10 L11.5 4.5 H15 V14 H1 Z" fill="#fff"/><circle cx="8" cy="9" r="3.6" fill="#4366c2"/><circle cx="8" cy="9" r="2.1" fill="none" stroke="#fff" stroke-width="1.1"/></svg>
<div class="a" style="left:1842.3px;top:617.7px;width:21.7px;height:20.6px;background:#151515;border-radius:0 4px 4px 0;"></div>
<svg style="left:1848px;top:623.5px" width="10" height="10" viewBox="-5 -5 10 10"><path d="M-4.4 -1.9000000000000001 L0 2.5 L4.4 -1.9000000000000001" fill="none" stroke="#e8e8e8" stroke-width="1.4" stroke-linecap="round" stroke-linejoin="round"/></svg>
<svg style="left:1870.3px;top:622px" width="12" height="12" viewBox="-6 -6 12 12"><path d="M-3.8 -3.8 L3.8 3.8 M3.8 -3.8 L-3.8 3.8" stroke="#e0e0e0" stroke-width="1.3" stroke-linecap="round" fill="none"/></svg>
<svg style="left:1902px;top:625px" width="12" height="6" viewBox="0 0 12 6"><g fill="#4a4a4a"><circle cx="1.5" cy="1.2" r=".8"/><circle cx="4.5" cy="1.2" r=".8"/><circle cx="7.5" cy="1.2" r=".8"/><circle cx="10.5" cy="1.2" r=".8"/><circle cx="1.5" cy="4.4" r=".8"/><circle cx="4.5" cy="4.4" r=".8"/><circle cx="7.5" cy="4.4" r=".8"/><circle cx="10.5" cy="4.4" r=".8"/></g></svg>
<div class="a" style="left:1646px;top:651.5px;width:32.5px;height:20.5px;background:#151515;border-radius:4px 0 0 4px;"></div>
<svg style="left:1649.0px;top:654.2px" width="15" height="15" viewBox="0 0 16 16" ><rect x="2.5" y="1.5" width="8" height="5.2" rx="1.2" fill="#e8e8e8"/><rect x="4.2" y="3.4" width="4.6" height="1" fill="#222"/><rect x="1" y="9" width="8" height="5.2" rx="1.2" fill="#e8e8e8"/><rect x="2.7" y="10.9" width="4.6" height="1" fill="#222"/><path d="M11.5 3.5 H13.2 Q14.5 3.5 14.5 5 V11 Q14.5 12.3 13.2 12.3 H10.5 M12 10.6 L10.3 12.3 L12 14" fill="none" stroke="#e8e8e8" stroke-width="1.1"/></svg>
<svg style="left:1667.3px;top:657.2px" width="10" height="10" viewBox="-5 -5 10 10"><path d="M-3.7 -1.55 L0 2.15 L3.7 -1.55" fill="none" stroke="#ddd" stroke-width="1.4" stroke-linecap="round" stroke-linejoin="round"/></svg>
<div class="a" style="left:1678.8px;top:651.5px;width:232.5px;height:20.5px;background:#3c3c3c;border-radius:0 4px 4px 0;"></div>
<svg style="left:1685.5px;top:656.2px" width="11" height="11" viewBox="0 0 11 11"><path d="M5.5 0.5 V10.5 M0.5 5.5 H10.5" stroke="#e8e8e8" stroke-width="1.1"/></svg>
<span class="t" style="transform:scaleX(1.041);left:1792.7px;top:653.7px;font-size:12px;color:#e8e8e8;">New</span>
<svg style="left:1648.5px;top:684.6px" width="10" height="10" viewBox="-5 -5 10 10"><path d="M-2.5 -5 L2.5 0 L-2.5 5" fill="none" stroke="#ddd" stroke-width="1.3" stroke-linecap="round" stroke-linejoin="round"/></svg>
<span class="t" style="transform:scaleX(1.044);left:1667.4px;top:681.8px;font-size:12px;color:#e4e4e4;">Manage</span>
<svg style="left:1602.6px;top:515.5px" width="16" height="16" viewBox="0 0 16 16" ><path d="M3.2 1 V8 M1.7 8 H4.7 V10.2 Q5.8 11 5.8 12.5 Q5.8 15 3.2 15 Q0.6 15 0.6 12.5 Q0.6 11 1.7 10.2 Z" fill="#d8d8d8" stroke="#d8d8d8" stroke-width=".8"/><path d="M9 1.2 V4.5 Q9 6.3 10.6 6.8 V15 H12.6 V6.8 Q14.2 6.3 14.2 4.5 V1.2 H12.8 V4.2 H10.4 V1.2 Z" fill="#d8d8d8"/></svg>
<svg style="left:1603.1px;top:557.5px" width="15" height="15" viewBox="0 0 16 16" ><path d="M1 4.5 V1.5 H4.5 M11.5 1.5 H15 V4.5 M15 11.5 V14.5 H11.5 M4.5 14.5 H1 V11.5" fill="none" stroke="#b0692a" stroke-width="1.2"/><rect x="4" y="4" width="8" height="8" rx="0.8" fill="#e08a3c"/></svg>
<svg style="left:1602.1px;top:588.5px" width="17" height="17" viewBox="0 0 16 16" ><path d="M12.6 1.3 L10.2 3.7 L12.3 5.8 L14.7 3.4 Q15.6 6.6 13.4 8.4 Q11.6 9.6 9.6 8.8 L4.6 14.3 Q3.3 15.4 2 14.2 Q0.8 12.9 1.9 11.6 L7.3 6.5 Q6.5 4.3 8 2.4 Q9.8 0.6 12.6 1.3 Z" fill="#6a8ff5"/></svg>
<svg style="left:1602.6px;top:619.5px" width="16" height="16" viewBox="0 0 16 16" ><path d="M3.5 2.5 V14 M3.5 3 L13 12.5 M3.5 3 L13.5 4.5" stroke="#4f78d8" stroke-width="1.2" fill="none"/><circle cx="3.5" cy="3" r="2.2" fill="#5b84f0"/><circle cx="13.3" cy="4.3" r="1.4" fill="#5b84f0"/><circle cx="13" cy="12.8" r="1.4" fill="#5b84f0"/><circle cx="3.5" cy="14" r="1.3" fill="#5b84f0"/></svg>
<svg style="left:1602.6px;top:650.5px" width="16" height="16" viewBox="0 0 16 16" ><path d="M11.5 3.2 A6 6 0 1 0 13.6 10.5" fill="none" stroke="#4a70d8" stroke-width="1.4"/><circle cx="7.2" cy="8.6" r="2.5" fill="#5b84f0"/><circle cx="13" cy="3.2" r="1.7" fill="#5b84f0"/></svg>
<svg style="left:1602.6px;top:681.5px" width="16" height="16" viewBox="0 0 16 16" ><path d="M2.2 9.5 Q2.2 6.2 5.5 5 L11 2 Q14.5 1.2 14.5 4.8 L13 10.5 Q11.8 14.8 7.5 14.8 Q2.2 14.5 2.2 9.5 Z" fill="none" stroke="#4a70d8" stroke-width="1.5"/><circle cx="7.6" cy="9.6" r="2.4" fill="none" stroke="#5b84f0" stroke-width="1.5"/></svg>
<svg style="left:1602.6px;top:712.0px" width="16" height="16" viewBox="0 0 16 16" ><path d="M3 3 H13 L8 13.5 Z" fill="none" stroke="#2fc48c" stroke-width="1.3"/><rect x="1.2" y="1.2" width="3.4" height="3.4" fill="#181818" stroke="#2fc48c" stroke-width="1.3"/><rect x="11.4" y="1.2" width="3.4" height="3.4" fill="#181818" stroke="#2fc48c" stroke-width="1.3"/><rect x="6.3" y="11.6" width="3.4" height="3.4" fill="#181818" stroke="#2fc48c" stroke-width="1.3"/></svg>
<svg style="left:1602.6px;top:745.0px" width="16" height="16" viewBox="0 0 16 16" ><circle cx="8" cy="8" r="6.8" fill="#e0525e"/><path d="M8 8 L2.2 4.6 A6.8 6.8 0 0 0 3.8 13.3 Z" fill="#7a222c"/><path d="M8 8 L13.3 12.2 A6.8 6.8 0 0 1 5.5 14.3 Z" fill="#f4b8bc"/><path d="M8 8 L14.7 7 A6.8 6.8 0 0 0 8.5 1.2 Z" fill="#a83040"/></svg>
<!-- BIG TEXT -->
<div class="big" style="left:93.2px;top:212.8px;font-size:47.5px;transform:scaleX(0.766)">Creating</div>
<div class="big" style="left:241.1px;top:212.8px;font-size:47.5px;transform:scaleX(0.721)">Grid</div>
<div class="big" style="left:93.4px;top:270.8px;font-size:47.5px;transform:scaleX(0.664)">SHIFT</div>
<div class="big" style="left:194.2px;top:270.8px;font-size:47.5px;transform:scaleX(0.702)">+A</div>
<div class="big" style="left:245.2px;top:270.8px;font-size:47.5px;transform:scaleX(0.874)">-&gt;</div>
<div class="big" style="left:291.9px;top:270.8px;font-size:47.5px;transform:scaleX(0.632)">MESH</div>
<div class="big" style="left:388.3px;top:270.8px;font-size:47.5px;transform:scaleX(0.872)">-&gt;</div>
<div class="big" style="left:435.4px;top:270.8px;font-size:47.5px;transform:scaleX(0.728)">Grid</div>
<div class="big" style="left:257.1px;top:772.6px;font-size:47.5px;transform:scaleX(0.712)">Set</div>
<div class="big" style="left:318.4px;top:772.6px;font-size:47.5px;transform:scaleX(0.820)">grid</div>
<div class="big" style="left:392.2px;top:772.6px;font-size:47.5px;transform:scaleX(0.779)">dimensions</div>
<div class="big" style="left:923.3px;top:251.7px;font-size:57px;transform:scaleX(0.782)">With</div>
<div class="big" style="left:1022.8px;top:251.7px;font-size:57px;transform:scaleX(0.796)">my</div>
<div class="big" style="left:1096.2px;top:251.7px;font-size:57px;transform:scaleX(0.769)">base</div>
<div class="big" style="left:1206.1px;top:251.7px;font-size:57px;transform:scaleX(0.777)">shape</div>
<div class="big" style="left:1341.1px;top:251.7px;font-size:57px;transform:scaleX(0.818)">complete</div>
<div class="big" style="left:923.3px;top:323.4px;font-size:57px;transform:scaleX(0.851)">with</div>
<div class="big" style="left:1020.1px;top:323.4px;font-size:57px;transform:scaleX(0.801)">dome,</div>
<div class="big" style="left:1155.0px;top:323.4px;font-size:57px;transform:scaleX(1.000)">I</div>
<div class="big" style="left:1181.7px;top:323.4px;font-size:57px;transform:scaleX(0.776)">set</div>
<div class="big" style="left:1255.7px;top:323.4px;font-size:57px;transform:scaleX(0.805)">out</div>
<div class="big" style="left:1335.2px;top:323.4px;font-size:57px;transform:scaleX(0.834)">to</div>
<div class="big" style="left:1387.7px;top:323.4px;font-size:57px;transform:scaleX(0.816)">create</div>
<div class="big" style="left:920.6px;top:395.0px;font-size:57px;transform:scaleX(0.782)">my</div>
<div class="big" style="left:994.1px;top:395.0px;font-size:57px;transform:scaleX(0.848)">grid</div>
<div class="big" style="left:1086.6px;top:395.0px;font-size:57px;transform:scaleX(0.858)">for</div>
<div class="big" style="left:920.9px;top:467.0px;font-size:57px;transform:scaleX(0.830)">instancing.</div>
</body>
</html>
